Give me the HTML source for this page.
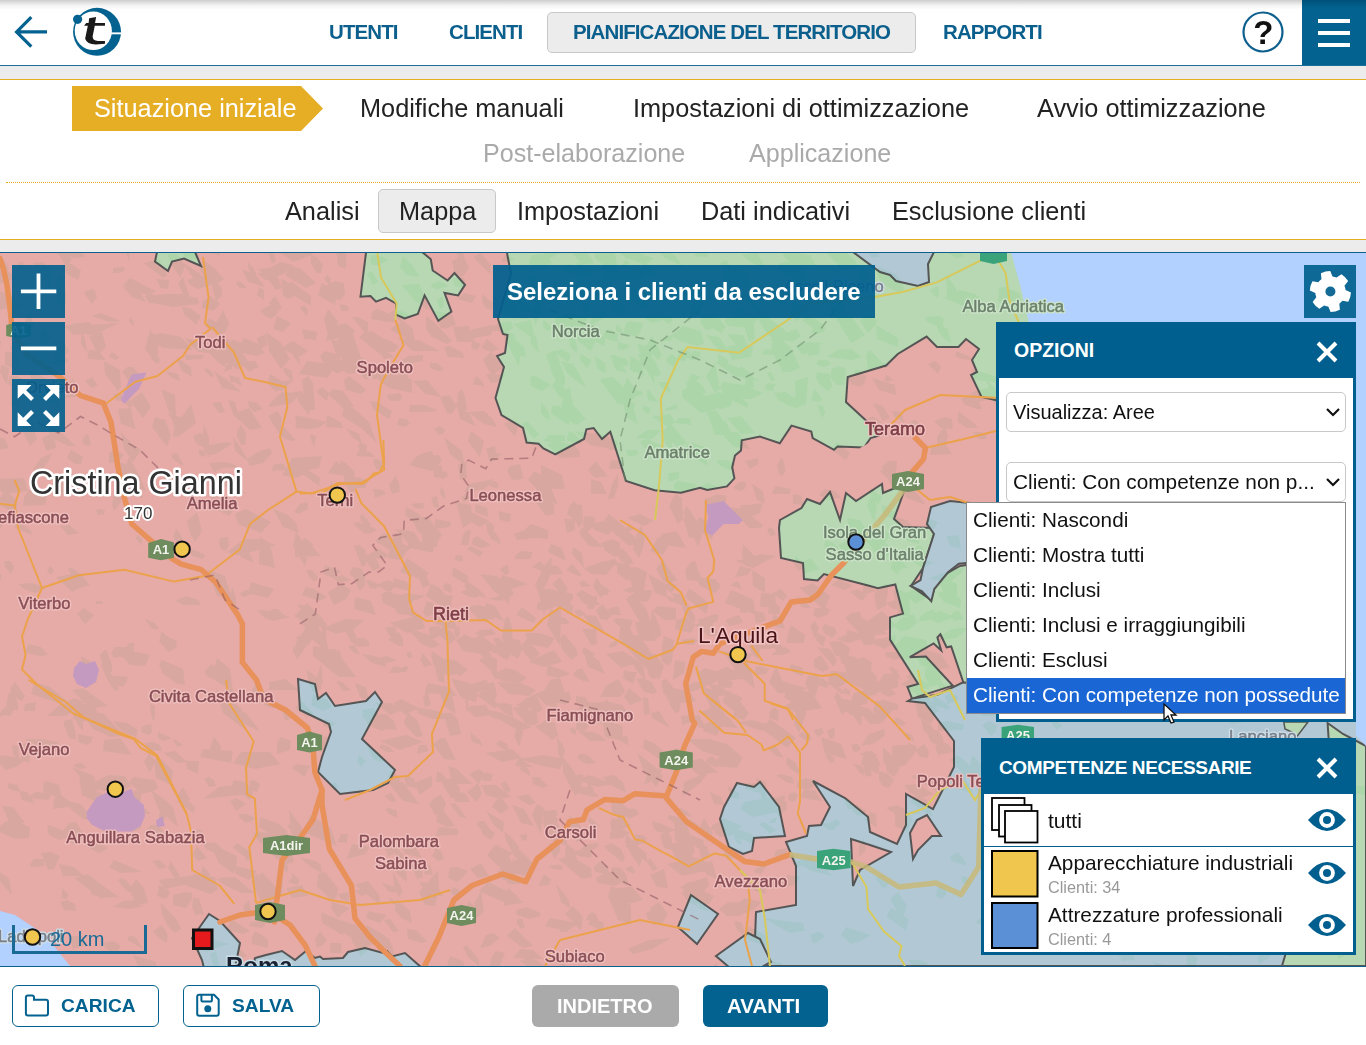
<!DOCTYPE html>
<html><head><meta charset="utf-8">
<style>
*{box-sizing:border-box;margin:0;padding:0}
html,body{width:1366px;height:1045px;overflow:hidden;background:#fff;font-family:"Liberation Sans",sans-serif}
.abs{position:absolute}
.t{position:absolute;white-space:nowrap;line-height:1}
#top{position:absolute;left:0;top:0;width:1366px;height:66px;background:#fff;border-bottom:1px solid #1d6e97}
#shadow{position:absolute;left:0;top:0;width:1366px;height:10px;background:linear-gradient(#cecece,#f4f4f4 55%,#fff)}
.nav{color:#0b5f8d;font-weight:bold;font-size:20.5px;letter-spacing:-0.9px}
#gray1{position:absolute;left:0;top:66px;width:1366px;height:187px;background:#ececec}
#steps{position:absolute;left:0;top:79px;width:1366px;height:161px;background:#fff;border-top:1px solid #e5ae25;border-bottom:1px solid #e5ae25}
#dots{position:absolute;left:6px;top:182px;width:1354px;height:0;border-top:1.5px dotted #e5ae25}
.step{color:#222;font-size:25.3px}
.gstep{color:#aaa;font-size:25.1px}
.sub{color:#222;font-size:25.3px}
#map{position:absolute;left:0;top:252px;width:1366px;height:715px;border-top:1px solid #0d5f8e;border-bottom:1px solid #0d5f8e;overflow:hidden;background:#e6aaa6}
.btn{position:absolute;height:42px;border:1.5px solid #0d5f8e;border-radius:6px;color:#0d5f8e;font-weight:bold;font-size:21px}
.panel{position:absolute;background:#fff;border:3px solid #005f8e}
.phead{position:absolute;left:0;top:0;right:0;background:#005f8e;color:#fff;font-weight:bold;font-size:20px}
</style></head><body>
<div id="gray1"></div>
<div id="top">
  <div id="shadow"></div>
  <!-- back arrow -->
  <svg class="abs" style="left:10px;top:12px" width="40" height="40" viewBox="10 12 40 40"><path d="M17.3,31.9 H47 M31.3,17.2 L16.6,31.9 L31.3,46.6" fill="none" stroke="#03628f" stroke-width="3.2" stroke-linejoin="miter"/></svg>
  <!-- logo -->
  <svg class="abs" style="left:68px;top:4px" width="60" height="56" viewBox="68 4 60 56">
    <circle cx="97.05" cy="31.85" r="24" fill="#03628f"/>
    <ellipse cx="93.3" cy="30.8" rx="18.6" ry="19.3" fill="#fff"/>
    <rect x="110" y="32.4" width="12" height="1.9" fill="#fff"/>
    <circle cx="77.6" cy="19.3" r="4.6" fill="#03628f"/>
    <path d="M89.16,18.19 L96.12,17.12 L95.05,23.01 L104.96,23.01 L104.96,25.69 L94.78,25.69 L92.64,36.14 Q92.5,40.5 98,40.96 L104.96,40.96 L104.96,43.64 L95.85,44.44 Q87,44.5 85.14,38.82 L87.82,25.69 L84.07,25.69 L86.21,23.01 L88.62,23.01 Z" fill="#1a1a1a"/>
  </svg>
  <div class="t nav" style="left:329px;top:22.4px">UTENTI</div>
  <div class="t nav" style="left:449px;top:22.4px">CLIENTI</div>
  <div class="abs" style="left:547px;top:12px;width:369px;height:41px;background:#ececec;border:1px solid #c8c8c8;border-radius:5px"></div>
  <div class="t nav" style="left:573px;top:22.4px">PIANIFICAZIONE DEL TERRITORIO</div>
  <div class="t nav" style="left:943px;top:22.4px">RAPPORTI</div>
  <svg class="abs" style="left:1241px;top:10px" width="44" height="44" viewBox="0 0 44 44"><circle cx="22" cy="22" r="19.5" fill="none" stroke="#0d5f8e" stroke-width="2.2"/><text x="22.3" y="33.8" text-anchor="middle" font-family="Liberation Sans" font-weight="bold" font-size="33" fill="#111">?</text></svg>
  <div class="abs" style="left:1302px;top:0;width:64px;height:65px;background:linear-gradient(#005078,#03628f 8px)"></div>
  <div class="abs" style="left:1318px;top:19px;width:32px;height:4.4px;background:#fff"></div>
  <div class="abs" style="left:1318px;top:31px;width:32px;height:4.4px;background:#fff"></div>
  <div class="abs" style="left:1318px;top:43px;width:32px;height:4.4px;background:#fff"></div>
</div>

<div id="steps">
  <svg class="abs" style="left:72px;top:6px" width="251" height="45" viewBox="0 0 251 45"><path d="M0 0 H229 L251 22.5 L229 45 H0 Z" fill="#e5ae25"/></svg>
  <div class="t step" style="left:94px;top:15.6px;color:#fff">Situazione iniziale</div>
  <div class="t step" style="left:360px;top:15.6px">Modifiche manuali</div>
  <div class="t step" style="left:633px;top:15.6px">Impostazioni di ottimizzazione</div>
  <div class="t step" style="left:1037px;top:15.6px">Avvio ottimizzazione</div>
  <div class="t gstep" style="left:483px;top:60.5px">Post-elaborazione</div>
  <div class="t gstep" style="left:749px;top:60.5px">Applicazione</div>
  <div class="abs" style="left:378px;top:109px;width:118px;height:44px;background:#ececec;border:1px solid #c8c8c8;border-radius:5px"></div>
  <div class="t sub" style="left:285px;top:118.6px">Analisi</div>
  <div class="t sub" style="left:399px;top:118.6px">Mappa</div>
  <div class="t sub" style="left:517px;top:118.6px">Impostazioni</div>
  <div class="t sub" style="left:701px;top:118.6px">Dati indicativi</div>
  <div class="t sub" style="left:892px;top:118.6px">Esclusione clienti</div>
</div>
<div id="dots"></div>

<div id="map">
<svg width="1366" height="713" viewBox="0 253 1366 713" style="position:absolute;left:0;top:0;display:block">
<defs>
  <pattern id="forestP" width="60" height="60" patternUnits="userSpaceOnUse">
    <rect width="60" height="60" fill="none"/>
    <path d="M5 8 l14 -4 l6 10 l-8 9 z M32 30 l12 -6 l10 12 l-10 10 l-9 -3 z M8 40 l9 2 l-2 12 l-10 -4 z" fill="#000" opacity="0.05"/>
  </pattern>
</defs>
<!-- base pink -->
<rect x="0" y="253" width="1366" height="713" fill="#e6aaa7"/>

<!-- green A -->
<path d="M507,253 L511,274 L498,319 L503,334 L507.5,335 L505,353 L497,356 L504,367 L495.5,398 L501.5,415 L523,428 L526.6,442.5 L538.6,443.7 L543.4,448.5 L555.3,454.4 L584,439 L586.4,429.3 L593.6,428 L602,439 L610.3,431.7 L626,481 L654.6,490.3 L681,492.7 L700,487.8 L707.3,490 L727,486.4 L734.4,478.3 L732.2,467.3 L735,455.6 L741,450.5 L741.7,440.3 L760,436.6 L779.8,443.2 L791.5,425.6 L811.3,431.5 L812.7,438 L834,449.8 L837.6,446.6 L864,447.6 L870.6,438 L883.7,434.4 L1366,434 L1366,253 Z" fill="#b7d8b2"/>
<path d="M507,253 L511,274 L498,319 L503,334 L507.5,335 L505,353 L497,356 L504,367 L495.5,398 L501.5,415 L523,428 L526.6,442.5 L538.6,443.7 L543.4,448.5 L555.3,454.4 L584,439 L586.4,429.3 L593.6,428 L602,439 L610.3,431.7 L626,481 L654.6,490.3 L681,492.7 L700,487.8 L707.3,490 L727,486.4 L734.4,478.3 L732.2,467.3 L735,455.6 L741,450.5 L741.7,440.3 L760,436.6 L779.8,443.2 L791.5,425.6 L811.3,431.5 L812.7,438 L834,449.8 L837.6,446.6 L864,447.6 L870.6,438 L883.7,434.4" fill="none" stroke="#555" stroke-width="2"/>
<!-- pink Teramo -->
<path d="M883.7,434.4 L866,420.5 L846,402 L847.7,377 L886,365.5 L897.8,354 L926.6,336.6 L937,347 L958.5,347 L966,339 L979,349 L972,360 L977,372 L971,375 L981.5,397 L1000,401 L1000,530 L870,530 L860,448 Z" fill="#e6aaa7"/>
<path d="M883.7,434.4 L866,420.5 L846,402 L847.7,377 L886,365.5 L897.8,354 L926.6,336.6 L937,347 L958.5,347 L966,339 L979,349 L972,360 L977,372 L971,375 L981.5,397 L1000,401" fill="none" stroke="#555" stroke-width="2"/>
<!-- blue C top -->
<path d="M853,252 L880,272 L890,275 L896,281 L918,286 L929,282 L928,264 L934,252 Z" fill="#b2c9d5" stroke="#555" stroke-width="2"/>
<!-- small green D top-left -->
<path d="M157,252 L155,261.5 L168,271 L172,261.5 L184,258.6 L201,266 L195,252 Z" fill="#b7d8b2" stroke="#555" stroke-width="2"/>
<!-- green Foligno top -->
<path d="M366.1,252 L360.5,296.7 L370.5,296 L376,301.6 L386,297.9 L396,303.5 L396,314.7 L404.7,318.4 L417.8,314 L424.6,295.4 L438.3,320.9 L451.4,311.6 L444.5,292.9 L458.2,295.4 L465,284.8 L454.5,273 L447.6,280.5 L432.7,270.5 L430.8,259.3 L422.1,252 Z" fill="#b7d8b2" stroke="#555" stroke-width="2"/>
<!-- green Isola -->
<path d="M780,520 L801.5,508 L807,499 L820,504 L830,492 L840,520 L846,493 L856,501 L882,484 L883,493 L907,483 L894,519 L903,527 L933,528 L934,534 L923,568 L911,586 L931,600 L937,579 L960,566 L1000,560 L1000,700 L963.4,682.5 L951.2,646.5 L946.6,647.3 L940.4,634.3 L937.4,637.3 L941.2,650.4 L933.6,643.5 L909.8,657.2 L925.9,656.5 L952.7,685.6 L912,698.6 L907.5,687 L918.2,684 L890,639.6 L890,617.4 L903,613.6 L895.3,584.5 L877.7,588.3 L870,586 L824,574 L817.6,580.5 L804,579 L803,563 L781,558 L779,528 Z" fill="#b7d8b2" stroke="#555" stroke-width="2"/>
<!-- blue F -->
<path d="M927,524 L931,507 L950,501 L1000,506 L1000,560 L958.8,563.8 L948,572.3 L934.3,589 L931.3,601.3 L922,591.4 L910.6,586 L920.5,580 L923,568 L934,534 Z" fill="#b2c9d5" stroke="#555" stroke-width="2"/>
<!-- blue G large lower right -->
<path d="M786,842 L807,836 L809,826 L821,825 L830,807 L813,781 L845,798 L868,817 L870,832 L897,844 L906,825 L906,794 L933,809 L954,767 L954,741 L925,703 L908,701 L912,698.6 L937.4,694.8 L962.6,682.5 L1366,690 L1366,966 L754,966 L756,912 L796,905 L796,866 Z" fill="#b2c9d5" stroke="#555" stroke-width="2"/>
<!-- pink islands in G -->
<path d="M851,839 L870,845 L891,852 L860,870 L853,886 Z" fill="#e6aaa7" stroke="#555" stroke-width="2"/>
<path d="M910,833 L917,820 L927,815 L941,836 L932,836 L918,850 L913,859 Z" fill="#e6aaa7" stroke="#555" stroke-width="2"/>
<!-- green coastal right -->
<path d="M1327.6,723 L1343,734 L1366,746 L1366,966 L1282,966 L1300,905 L1330,760 Z" fill="#b7d8b2" stroke="#555" stroke-width="2"/>
<path d="M1283.8,722 L1285,729 L1292,732 L1296,737.7 L1308,722 Z" fill="#b7d8b2" stroke="#555" stroke-width="1.5"/>
<!-- blue H lake region -->
<path d="M298,679 L315,684 L318,699 L326,693 L335,706 L366,701 L375,692 L382,702 L362,739 L395,770 L388,783 L373,790 L340,794 L318,772 L322,757 L331,732 L329,724 L300,710 Z" fill="#b2c9d5" stroke="#555" stroke-width="2"/>
<!-- blue I Fucino -->
<path d="M737,783 L754,787 L760,782 L779,807 L785,836 L754,838 L752,851 L743,854 L729,847 L720,819 L724,807 Z" fill="#b2c9d5" stroke="#555" stroke-width="2"/>
<!-- blue J small -->
<path d="M691,895 L718,914 L697,944 L678,927 Z" fill="#b2c9d5" stroke="#555" stroke-width="2"/>
<path d="M716,956 L748,933 L760,939 L771,962 L760,968 L730,968 Z" fill="#b2c9d5" stroke="#555" stroke-width="2"/>
<!-- Roma region -->
<path d="M209,914 L220,921 L240,943 L235,968 L204,968 L202,960 L192,938 Z" fill="#b2c9d5" stroke="#555" stroke-width="2"/>
<path d="M253,968 L255,958 L266,955 L282,951 L295,960 L306,951 L315,958 L320,956.5 L323,959 L343,958 L348,952 L365,948 L383,953 L387,951 L392,956.5 L405,953 L422,968 Z" fill="#b2c9d5" stroke="#555" stroke-width="2"/>
<path d="M55,239l8,4l9,16l-5,8l-14,-21zM59,243l11,0l7,1l8,13l-12,1l-4,-4zM129,261l-7,-19l5,-1l3,9zM199,260l-13,-2l-6,-8l4,-10l7,3l6,7zM211,252l-1,-5l3,-3l5,6l2,6zM259,242l-2,9l-3,2l-8,-4l0,-3l5,-6zM272,264l-4,-12l5,-1l3,10zM309,256l-16,6l-12,-9l12,-7l11,0l9,8zM346,252l0,17l-8,-3l-3,-28zM402,245l-2,4l-9,-1l1,-4l9,-5zM449,245l-10,5l-6,-2l11,-10zM461,249l3,6l1,8l-7,-4l-1,-5zM515,259l-7,3l-7,-1l4,-6zM551,258l-9,-1l5,-8l8,-5l4,9zM570,253l-1,-7l1,-3l3,-3l1,4l1,7zM573,254l12,-5l5,8l4,7l-12,0zM595,258l1,-8l3,3l4,12zM602,254l5,2l6,7l0,4l-10,-5l-5,-5zM629,249l24,9l-7,7l-20,-7l-12,-10zM657,249l18,6l7,11l-17,-8zM709,249l-2,8l-13,-1l8,-7zM730,231l22,7l5,11l3,10l-12,-6zM757,256l6,6l0,5l-11,-4l-11,-9l9,0zM793,265l-6,-5l-8,-10l31,5l6,11zM841,248l15,13l-3,7l-10,2l-19,-20l8,-5zM863,237l9,8l8,12l-8,1l-7,-11zM951,241l13,15l-7,2l-9,-5zM1057,251l-4,-7l6,-2l6,13zM1075,240l6,4l-4,4l-5,3l-8,-7l3,-4zM1233,264l-5,-2l-5,-12l3,-10l6,3zM1277,255l4,-2l7,3l6,5l-7,1l-6,1zM9,268l-4,11l-7,-6l-1,-23zM23,269l-5,-3l0,-4l6,1zM43,262l9,9l-1,17l-11,-12l-7,-13zM70,276l-8,-8l2,-5l8,1l9,7l-3,9zM120,273l-7,0l0,-5l11,-1l1,3zM149,267l-5,-4l15,-4l4,9l5,7l-5,3zM173,267l-6,-13l10,0l8,11l-2,7l-3,5zM209,284l-14,-3l-4,-6l-9,-13l17,11zM207,281l-7,-11l3,-10l11,8l10,11l-10,7zM248,267l0,-5l6,7l4,11l-8,-8zM293,265l-9,9l-18,6l-9,-6l24,-12zM301,269l15,14l-10,5l-21,-13l6,-9zM311,264l0,-9l6,2l6,8l-2,8l-4,0zM383,257l5,3l-9,5l-7,0l-2,-5l2,-5zM407,275l-7,-8l3,-11l9,9l8,12zM469,268l-6,8l-8,0l-3,-15l4,-2l7,-4zM473,257l8,-4l10,12l-1,9zM531,271l-2,-10l3,-6l14,-1l6,9l-7,5zM588,269l-6,10l-21,-11l7,-4zM600,270l-10,7l-13,-3l0,-12zM614,247l5,29l-12,5l-5,-21l-7,-18zM626,260l4,3l-9,6l0,-3zM644,264l8,2l4,12l-6,-2l-11,-6zM726,260l11,16l-10,-1l-7,-12zM804,268l6,19l-6,2l-22,-17l-4,-8l8,-2zM859,265l-4,5l-9,-4l7,-5zM1023,264l-10,-5l9,-8l9,8l2,5zM1150,257l8,-2l4,10l-6,2l-4,-5zM-1,284l0,-11l6,-2l11,8zM19,279l-14,0l-7,-6l7,-4zM123,285l7,-7l27,14l-18,2zM169,280l-1,9l-7,-1l-5,-9zM183,277l7,21l-5,0l-7,-15l2,-2zM208,274l3,11l-13,4l-8,-4l-3,-5l8,-2zM237,281l4,1l6,6l-7,0l-4,-4zM242,269l14,6l9,12l-17,-5zM276,290l-9,-12l-9,-9l10,-1l10,9l4,11zM295,280l1,-5l10,5l4,6l-6,1zM324,279l3,-4l4,4l-1,7zM378,282l-5,3l-6,-11l5,-3zM437,289l-6,-2l1,-3l7,-3l4,2l5,3zM453,279l8,-3l4,4l1,7l-7,0l-4,-1zM517,297l-13,-2l-7,-11l-2,-9l15,12zM515,290l-7,-5l7,-1l8,7zM535,290l-7,-15l16,6l-2,7zM581,290l-8,-2l6,-8l12,1l4,6zM599,287l-4,-5l8,-5l11,9zM642,279l-16,1l-19,3l12,-10l8,-2l16,-2zM745,285l-17,4l-5,-13l21,-2zM740,285l-4,-10l-3,-9l10,2l8,17l-5,3zM861,264l7,15l-3,6l-6,-12zM896,274l9,15l-5,4l-18,-9l-6,-12l3,-5zM947,295l-1,-20l4,5l5,6l6,18l-9,-5zM1049,290l-4,-8l2,-1l4,0l1,7l1,5zM1129,273l5,13l6,11l-10,2l-5,-13l2,-10zM1347,282l5,0l1,10l-5,11l-5,-8zM1369,275l7,11l-4,3l-10,-9l-3,-8zM-7,302l8,-11l12,6l9,10l-13,1l-9,2zM56,278l5,-4l5,19l0,7l-2,12l-7,-13zM97,297l-5,7l-6,-8l-2,-4l8,-3l3,2zM122,286l18,6l6,10l-14,-5zM155,296l1,7l-7,0l-4,-7l4,-5zM188,294l-12,6l-8,6l-16,-3l-3,-7l15,-2zM182,295l16,3l1,6l-27,3l-16,-6l0,-6zM222,296l-6,5l-5,-18l3,-5l8,11zM259,287l5,3l0,10l-7,-5zM288,299l-5,-3l-2,-18l8,5l6,12l-4,3zM311,306l-18,-11l-6,-7l4,-7l8,6l12,9zM335,305l-17,-10l4,-12l15,9zM325,286l10,-5l9,2l1,10l-4,7l-10,-2zM425,297l4,13l-14,-9l-13,-16l17,-1zM442,297l2,5l-1,5l-3,2l-3,-7l2,-4zM476,296l-4,7l-15,-4l7,-6zM492,310l-6,-2l-4,-7l0,-7l11,9zM514,301l2,8l-6,-1l-7,-3l3,-5l4,-1zM533,292l7,2l4,5l-6,4l-4,-1zM552,303l-5,1l3,-15l5,-8l5,7l2,14zM568,300l-1,-7l8,-2l5,8zM585,292l1,8l-3,4l-5,-8l3,-11zM645,310l-23,-16l8,-7l22,9zM666,296l0,6l-8,-8l-3,-5l2,-4zM689,295l-2,-9l8,-4l9,3l0,5l-4,6zM710,286l1,-8l18,14l-3,4zM726,283l11,7l-1,15l-14,-10zM748,293l9,7l-8,6l-7,-12zM786,309l-8,-8l-4,-8l12,6zM793,296l-9,-1l-9,-5l9,-2l7,-1zM812,304l-16,-9l5,-5l17,11zM938,286l1,4l0,5l-2,3l-3,-3l-4,-5zM966,307l-22,-9l16,-8l15,4l9,6zM999,288l6,-1l14,6l5,15l-6,5l-20,-12zM1170,304l-7,2l-3,1l-1,-5l3,-3l6,1zM109,322l-17,-6l9,-3l20,8zM190,308l11,8l-5,9l-12,-11l-2,-7zM211,296l9,8l-7,7l-11,-3l0,-6zM279,311l-3,4l-5,4l-7,-4l-4,-5l11,-5zM275,296l7,12l-7,4l-6,-9zM300,308l4,-3l4,5l-1,7zM349,307l-1,4l-7,0l-1,-4l0,-3l5,1zM393,315l3,7l-8,0l-17,-3l1,-7l5,-3zM389,312l7,-2l8,2l6,4l-9,6zM434,311l18,3l4,11l-12,4zM500,311l9,-6l21,14l-19,-1zM523,314l-6,-13l10,2l4,7zM532,311l8,-11l-1,17l-4,9zM590,306l2,4l-7,2l-4,-7l5,-2zM593,315l13,-5l0,7l-17,9zM619,315l-9,-12l-5,-7l14,6l5,2l2,9zM660,321l-8,2l-9,-6l12,-3l7,4zM656,313l10,2l5,1l2,4l-4,4l-8,-5zM699,298l4,2l-4,16l-3,-1l-6,2l2,-12zM735,311l4,-6l4,6l1,5l-2,4l-10,-7zM793,302l2,0l5,6l-1,12l-3,1l-5,-9zM841,303l4,12l-3,4l-8,-5l-8,-13zM926,317l13,-1l5,3l-2,9l-16,-7zM1052,302l12,13l-3,4l-19,-7zM1137,314l8,0l5,11l-15,1zM1269,323l-9,6l-7,-9l0,-8l9,-1zM31,310l3,18l-7,7l-2,-15zM73,335l-8,-9l16,-3l8,10zM91,331l-11,3l-4,-2l-5,-8l18,-2l6,6zM96,334l-10,1l3,-10l30,-2zM129,321l1,-4l4,5l-1,4zM225,328l-6,6l-14,-8l4,-8zM223,310l6,13l-3,8l-5,4l-6,-2l1,-10zM277,316l14,7l-8,9l-10,-3zM317,332l-1,8l-12,-1l-2,-10zM328,309l10,12l-3,14l-8,-3l-3,-13zM326,341l3,-14l17,-4l10,9l-12,5zM358,317l10,5l0,15l-7,-9l-9,-11zM415,344l-25,-15l13,-8l10,8zM432,337l-6,-8l0,-13l8,6l18,19l-5,3zM438,322l-1,-6l5,3l4,7l-2,1l-3,2zM457,342l-4,-15l16,-1l6,16zM473,329l20,-4l-1,5l-1,5l-17,3l-8,-2zM513,328l-9,6l-7,-3l-11,-1l13,-7l12,-2zM529,336l-16,-12l18,-4l3,14zM543,327l0,-7l4,2l5,6l-4,3zM567,313l21,4l-5,12l-26,4l-2,-14zM587,325l7,-3l2,13l-6,-2zM616,327l1,-3l4,4l1,2l1,4l-7,-3zM629,321l14,2l-3,9l-3,4l-14,-1l3,-12zM714,324l-4,6l-5,-1l-5,-7l3,-7l7,3zM726,327l-5,6l-9,-5l-7,-13l10,-2zM724,320l19,-8l18,4l-12,12l-21,-2zM747,335l-4,-13l8,-3l3,7l1,13l-6,3zM752,304l17,14l17,13l-6,11l-12,-7l-8,-13zM777,337l-2,-7l4,-4l5,3zM824,332l-11,-4l-11,-8l4,-3l9,2l8,5zM819,324l7,4l-7,6l-8,-1l3,-7zM865,335l-14,8l-18,-30l18,3zM868,333l-8,-12l6,-6l11,5l-2,6l-4,4zM944,339l-5,-7l-5,-14l14,12l1,5l3,8zM1081,330l3,-4l5,0l6,1l-5,4l-4,3zM1124,327l4,-2l6,-4l12,12l-3,5l-11,1zM1210,328l-5,-12l6,-4l10,3l-1,15l-5,-1zM1,341l-1,8l-4,2l-7,-2l1,-10zM16,341l4,7l-1,5l-9,-4l2,-4zM21,351l-7,-10l9,0l7,2l2,5l-2,3zM43,328l8,8l-8,10l-3,-11zM69,351l-4,5l-7,-7l-4,-8l11,3zM81,328l4,11l2,14l-6,-9zM98,355l-9,-19l13,-4l4,15zM156,337l2,9l0,14l-6,-2l-7,-9l5,-19zM146,337l15,-4l20,4l12,13l-30,-2zM185,338l21,5l12,11l-19,-2l-9,-7zM232,350l0,-5l-1,-6l11,4l7,7l-9,6zM256,353l-9,-4l-6,-6l10,-3zM267,345l-8,5l-2,-12l9,-4zM272,342l9,4l0,11l-7,-5zM308,351l-7,5l-9,-2l-10,-6l7,-5l4,-2zM352,331l10,30l-10,3l-12,-9l-3,-30zM372,331l16,11l-2,17l-10,-8l-17,-14l6,-5zM399,346l-5,6l-10,0l-18,-14l20,1zM398,338l21,2l21,11l-27,0zM476,342l5,2l-4,6l-6,-2l1,-6zM487,339l12,10l-8,3l-10,-4zM518,348l-12,-5l-5,-14l13,5zM526,357l-12,-3l-6,-9l8,-5l8,7zM530,331l6,6l3,16l-8,-9zM575,338l2,9l0,6l-6,-5l-4,-15zM582,327l14,13l-5,11l-12,-9l-6,-15zM604,346l-9,-5l-1,-7l11,3l0,5zM606,339l-3,-5l5,-5l10,5l-1,8zM618,349l0,-7l11,3l-1,3l-5,2zM673,334l-1,4l-2,3l-7,0l1,-3zM682,342l-11,-6l12,-10l18,5l3,12l-6,3zM729,351l-8,2l-15,-18l13,2zM727,334l16,1l9,19l-13,-5zM771,341l3,-9l7,5l-3,4zM783,333l5,-1l8,-3l5,7l-9,6l-10,-2zM813,350l-10,5l-8,-9l13,-4l14,1zM898,347l-21,-8l-1,-14l22,13zM1013,352l-7,5l-5,-9l9,-6zM1052,351l-5,-7l7,-3l10,2l0,6zM1118,345l-8,-15l17,-1l4,13zM1214,351l0,-5l8,-3l6,7l-4,4zM1352,347l-2,4l-12,-5l4,-3l6,-1zM20,360l1,8l-7,1l-9,-4l0,-13l11,0zM42,349l10,13l-9,5l-12,-4l-8,-5l8,-4zM52,364l5,-12l12,8l-7,6zM106,360l-19,-1l2,-9l9,0zM109,357l3,-5l7,5l-3,3zM157,364l-6,-5l4,-5l3,3l2,2l-1,4zM186,360l-1,-5l14,0l6,0l-4,4zM218,362l-12,-12l7,-6l15,15l-3,8zM222,359l-7,-10l13,-10l17,17l3,6l-10,8zM244,338l14,6l7,9l-9,3l-14,-3l-3,-7zM269,351l-3,-19l15,11l9,16l-9,10zM300,365l-7,-9l2,-6l4,3zM345,369l-7,5l-13,-8l-5,-10l5,-5l13,4zM349,365l-13,-11l-5,-14l11,1l12,15l0,4zM363,357l4,10l-5,0l-6,-7zM383,354l4,-2l8,5l-12,2zM405,358l3,7l-3,4l-10,-5zM396,366l12,-10l15,-1l0,6zM462,352l3,6l-17,-1l-4,-10l6,-1zM492,376l-9,-16l8,-8l13,15zM520,356l-1,11l-11,-23l2,-7zM571,355l-3,7l-14,-10l8,-3zM580,360l0,-6l4,2l7,4l-1,4l-3,4zM616,370l-6,-15l6,0l11,18zM616,356l11,3l2,6l-11,2zM651,347l4,38l-10,-18l-8,-23zM646,347l6,-11l10,19l-4,5zM671,354l4,2l2,5l-4,6l-6,-4l-1,-4zM691,352l-6,9l-9,-1l5,-11zM692,361l-5,-4l7,-6l6,1l0,4zM728,360l0,9l-10,-5l0,-10zM732,360l-2,-6l-3,-8l17,-2l9,3l-2,10zM764,355l-2,-2l3,-4l5,1l2,1l5,3zM783,372l-12,-22l3,-18l17,16l9,20l-10,4zM808,356l-1,-11l13,1l-1,8zM820,366l-4,-2l3,-4l8,0l4,4l-7,3zM838,350l13,-1l11,8l-10,3l-25,-3zM884,364l-16,6l-2,-15l4,-5zM890,365l-4,3l-9,-3l-4,-3l8,0zM956,351l8,3l9,4l-3,2l-9,-1l-6,-3zM1115,367l-12,-3l0,-6l6,-2l7,6zM1,365l8,3l-2,18l-7,-14zM120,370l1,16l-3,5l-13,-17l-1,-13zM127,367l6,0l5,6l-2,6l-7,2l-7,-9zM170,372l8,2l2,7l-8,-3l-6,-6zM176,357l15,10l1,10l-10,-6zM214,376l-3,1l-7,-7l3,-2l4,3zM224,372l2,-6l6,-7l0,10zM229,375l11,3l-1,4l-8,0zM255,361l4,6l-6,2l-3,3l-7,-6l6,-5zM286,368l6,3l1,12l-7,-8l-3,-6zM328,378l-29,-4l8,-13l28,4zM343,359l10,1l3,13l-9,1l-7,-7l-2,-5zM377,373l-11,7l-11,-11l-1,-7l8,4zM370,371l6,-2l9,4l-2,6l-10,0zM396,370l2,-7l4,2l6,8l0,7l-4,3zM443,368l-1,3l-4,0l-8,-3l0,-5l7,0zM486,374l19,1l-4,6l-10,2zM565,377l0,8l-7,1l-6,-13l-6,-18l9,-5zM561,361l12,3l7,13l-13,-4l-3,-6zM568,374l4,-9l4,3l10,19l-7,-4zM595,356l10,7l1,10l-9,-4zM641,362l3,14l-14,-6l0,-14zM643,368l-5,-14l16,5l7,15l-4,3zM692,374l9,3l-6,4l-7,-2zM741,369l18,12l-24,-5l-20,-14l7,-1zM738,372l3,-6l12,9l-6,6zM771,381l-4,-8l4,-1l4,8zM839,366l7,3l-2,16l-7,0l-7,-8l2,-8zM866,376l-1,6l-4,3l-5,-7l-2,-7l3,-2zM893,380l-5,2l-4,-2l2,-5l4,2zM928,364l7,-3l6,5l-3,8zM972,369l25,8l0,6l-24,-4zM1036,362l5,2l6,6l-5,5l-17,-6l-2,-9zM1047,380l-2,-7l14,0l3,5zM1276,369l10,3l-8,8l-12,-5l-7,-4l1,-3zM1286,369l9,9l-5,4l-8,-9zM1321,365l10,8l4,14l-15,-12zM1351,373l-13,10l-12,-11l20,-6zM27,381l-4,7l-3,8l-12,-13l2,-7l7,0zM45,378l11,16l3,12l-20,-8l-7,-16l-4,-12zM73,397l-7,1l0,-10l7,-10l4,11l0,8zM92,377l6,8l-6,3l-7,-7zM133,384l-5,-4l4,-1l3,1l4,4l-3,2zM230,382l11,10l-19,-4l-8,-17zM242,385l-3,0l-4,-3l2,-3l4,3zM270,374l12,7l-6,11l-9,-9zM288,386l-6,5l-6,-1l0,-2l2,-6l14,-2zM302,380l6,-4l5,7l2,27l-9,0zM322,387l7,6l-1,3l-1,5l-9,-7l-1,-3zM349,376l12,9l5,5l-5,4l-15,-4l-2,-10zM376,378l-2,-9l38,10l0,14l-23,-5zM413,381l14,-1l14,17l-16,-3zM476,376l6,5l3,6l-7,-2l-5,0l1,-5zM551,385l-9,6l-11,-5l-1,-8l3,-3l11,6zM558,378l16,25l-14,-6l-8,-11zM624,404l-6,0l-18,-24l4,-2l9,-1l22,21zM641,395l-11,3l-7,-8l4,-12zM642,392l1,3l-11,0l3,-6zM668,382l2,8l1,3l-9,-5l-4,-6zM692,378l10,7l4,8l-18,-2l-2,-9zM720,389l-5,4l-9,-17l9,-13zM722,382l22,3l19,8l-12,6l-24,-1l-7,-10zM745,386l1,-8l7,-2l1,12zM765,390l1,-5l3,-2l7,1l-3,4l1,3zM796,403l-1,-22l13,-4l-2,27zM829,374l3,12l-4,5l-8,-6l-4,-7l1,-6zM847,377l20,-2l-5,12l-10,-2zM879,390l-7,-12l23,7l1,10zM968,404l4,-12l23,-6l-3,13zM1000,407l-10,-8l0,-9l-5,-11l9,8l8,11zM1006,397l-2,-17l9,8l2,14zM1041,387l-11,-6l1,-6l10,6zM1059,381l3,-15l7,15l2,9l-10,-2zM1130,390l-11,-2l-10,-11l3,-14l8,5l11,13zM1149,398l-8,-5l-5,-4l-5,-10l7,4l8,3zM1332,384l5,-3l5,3l-1,7zM1357,387l0,7l-4,10l-23,-7l7,-10zM16,387l4,15l-9,5l0,-19zM117,401l-4,-7l8,-1l3,7zM132,406l-2,2l-5,-5l3,-3l2,1zM151,407l-8,11l-13,-17l12,-9zM176,417l-7,-5l-8,-23l14,6zM219,413l-7,-10l9,-1l4,10zM238,412l-1,3l-4,-1l-2,-6l-3,-8l7,2zM254,412l-5,-5l-1,-6l9,2l6,6l-6,2zM276,406l-8,1l4,-6l10,-9l18,1l-8,10zM300,404l-6,-12l8,-1l4,7l4,13l-1,4zM328,394l5,-5l10,2l11,15l-8,5zM370,401l7,1l15,9l-3,8l-15,-9zM389,400l-2,-5l12,-2l3,3l-1,5l-8,0zM430,412l-21,0l1,-7l14,0l14,5zM447,413l-7,-16l9,-2l8,11l-5,8zM457,406l1,-13l4,-4l3,8l2,14zM572,402l-2,5l-7,8l-2,-6l5,-20l4,-1zM630,408l-7,-5l1,-3l11,3l-1,7zM648,400l-1,-8l1,-3l5,6l5,7l-5,-1zM665,409l13,-5l-2,5l-10,2zM717,409l-16,4l-19,-16l0,-6l10,-8l10,10zM732,399l-1,7l-10,3l-18,-6l2,-7l15,-4zM748,403l-1,5l-17,-9l-4,-10zM791,403l-11,-1l-6,-9l11,-1l6,3zM781,395l15,2l10,7l-10,4l-11,-4zM822,400l-4,2l-7,-2l2,-6l1,-5l5,5zM970,396l9,6l3,7l-5,0l-12,-4l-4,-6zM1287,408l-10,-2l-10,-14l10,-1zM1359,401l-11,-4l-4,-4l4,-1l10,2l5,4zM1372,401l5,4l6,9l-15,-6l-11,-8zM121,424l-3,-15l13,-1l2,12l3,9zM167,413l16,5l1,3l0,7l-10,-1l-2,-8zM196,423l-18,14l2,-18l11,-15zM249,408l13,20l-12,2l-18,-16zM277,411l5,7l-2,13l-4,-2l-8,-13zM320,427l-9,2l-16,-1l1,-5l-1,-8l32,7zM326,427l1,-12l14,7l2,6zM351,406l18,16l8,21l-16,-15l-19,-12l2,-11zM404,427l-7,-2l2,-7l8,1l3,5zM470,414l5,12l-11,-5l-4,-2l-4,-17l8,8zM497,427l-13,-3l-16,-12l16,-1l8,7zM541,413l0,-10l6,6l4,11l-6,-2zM558,406l14,8l-3,11l-10,-6l-8,-6l1,-7zM563,394l23,25l-10,6l-14,-9zM634,410l4,14l-12,-7l-4,-21zM642,409l2,-3l6,2l0,4l-2,2zM675,422l-7,5l-16,-10l18,-3zM675,423l3,-5l12,0l1,7zM705,410l12,1l10,16l-13,0zM822,418l-5,-13l6,1l2,7zM867,419l6,-3l9,6l-6,3zM890,418l-7,3l-10,-18l10,3zM892,411l10,1l2,11l-10,-7zM941,428l-7,-7l11,-4l7,2l1,10zM978,428l-11,0l-9,-6l0,-11l16,12zM1054,426l-4,4l-2,-16l4,-2zM1064,427l-2,-5l12,-3l1,4l-6,5zM1214,415l1,6l-1,3l-5,0l-1,-5l1,-3zM1338,416l-4,2l-5,1l-5,-8l2,-5l4,4zM21,419l9,-1l7,21l-7,7l-7,-13l-4,-12zM48,425l15,9l13,12l-8,0l-19,-10zM167,447l-15,-20l3,-10l10,3l6,15zM175,425l5,1l-1,10l-3,1l-3,-1zM205,436l-3,11l-6,-4l-3,-7l7,-3zM202,445l2,-21l5,14l0,20zM246,433l0,11l-5,1l-4,-9l0,-5l4,-6zM283,426l13,14l-4,1l-7,-2l-7,-7l-1,-7zM311,440l-1,-4l2,-2l4,3l-1,5l-1,5zM359,434l3,10l-10,-7l-6,-9zM439,435l-5,-6l5,-3l6,3l-1,4zM519,424l-4,13l-11,-13l6,-4zM539,434l-5,5l-12,-15l5,-3zM543,441l6,-6l12,0l4,1l0,5l-14,1zM578,437l4,7l-15,-3l1,-8l3,-2zM604,435l14,6l-2,9l-26,-5l-16,-14zM652,439l-16,-1l11,-8l14,0zM671,424l16,19l-8,5l-18,-15zM726,435l-11,0l-6,-17l9,1l8,3l6,13zM741,434l-14,-16l14,-2l14,17zM909,424l5,-5l7,6l-4,4zM941,431l4,-4l3,9l-2,9l-9,0l0,-8zM987,434l-1,5l-7,0l-6,-7l6,0zM1110,416l6,7l8,14l-2,4l-8,-5zM1232,436l-6,2l-3,-8l6,-19l5,-5l-1,21zM1265,441l-5,-5l-2,-4l13,-2l6,6l-5,1zM-12,452l-3,-14l19,0l5,10zM56,448l-10,3l-4,-13l12,-6zM88,434l2,6l1,5l-5,1l-4,-4l2,-6zM133,462l-9,-13l-3,-17l10,11l10,7zM205,451l1,6l-7,-2l0,-6zM227,442l5,2l-16,10l-5,1l-6,-5l4,-5zM241,448l9,15l-15,-12l-2,-14zM263,463l-14,3l-1,-8l12,-7l10,-3l2,5zM362,453l-4,-6l2,-4l2,0l5,2l-1,8zM375,457l-19,-1l4,-7l10,3zM444,437l18,14l3,15l-15,-12zM454,450l3,0l2,1l1,2l1,5l-5,-1zM484,441l-4,16l-12,-16l3,-10zM497,460l-7,2l-4,-13l9,-3zM547,444l12,-3l16,5l5,6l-1,5l-19,1zM606,438l5,2l3,8l-5,2l-3,-3zM636,450l3,3l-4,3l-7,0l-2,-6zM648,439l14,7l-10,3l-8,-1l-4,-7zM672,451l-7,-8l-2,-12l9,11zM685,454l0,-6l3,-5l9,11l-4,3zM687,449l5,-6l12,4l2,10l2,9l-12,-7zM720,432l18,0l12,17l-16,-2zM846,460l-14,-10l5,-8l7,5l6,6zM932,445l14,-1l6,10l-22,1zM1122,455l-10,-14l28,7l-4,10zM1126,441l-2,-3l11,2l2,4l-7,0zM1151,455l-7,-2l-2,-9l14,9zM38,475l-5,0l1,-7l7,-10l11,-5l-3,7zM83,457l-2,7l-6,0l-8,-6l4,-8l6,3zM115,449l9,6l-5,6l-10,2l0,-10zM123,463l9,5l10,10l-9,1l-17,-7l0,-10zM172,458l0,-4l5,-1l6,11l-1,2zM223,468l-9,4l-5,-9l12,-1l9,1l9,4zM273,465l9,-2l6,7l-16,1zM319,468l-35,6l8,-16l30,-2zM336,461l14,10l-5,5l-17,-3zM377,459l8,3l0,5l-8,3l-3,-6l-1,-5zM430,467l-11,-3l-5,-4l6,-6l12,-3l3,9zM431,471l-22,-6l8,-9l22,-1l3,6zM498,457l-7,5l-1,-3l-3,-2l5,-5l10,2zM622,461l-1,8l-12,0l2,-9zM733,470l-4,0l-10,-5l-2,-5l9,0l9,4zM758,464l-8,5l-5,-8l13,-3zM785,472l-3,4l-3,-2l-2,-9l5,-8l3,10zM881,468l7,-7l9,0l-1,11zM1034,460l-4,-7l7,-1l6,2l-3,5zM1052,461l7,-2l5,3l-4,2zM1068,446l16,16l4,11l-19,-8l-14,-18zM1214,454l13,-5l4,14l-4,9l-11,-11zM1234,449l11,10l3,8l-8,0l-10,-1l1,-12zM1318,474l-9,-17l5,-7l9,12l0,5zM146,491l-15,-5l-7,-15l5,-14l8,14zM178,482l-10,6l-4,-11l16,-5zM230,472l12,17l-10,3l-15,-13zM298,466l7,7l-8,5l-15,-3l6,-8zM320,478l-1,8l-18,-13l-1,-9zM352,496l-7,-13l-5,-23l6,3l8,8l2,16zM353,488l-11,-6l16,-5l10,4l-3,7zM396,487l-4,4l-1,-6l1,-4l4,-6l1,5zM443,472l-5,6l-4,-1l-2,-11l9,-1zM448,476l-5,3l-10,-4l13,-4zM460,480l-2,-16l8,-2l1,16zM507,471l3,-5l10,-2l2,8l1,7l-11,1zM534,483l-3,-1l1,-3l8,-2l1,4l-3,5zM537,484l4,-9l0,-10l21,10l3,14l-10,0zM588,470l8,-9l5,7l7,8l-13,2zM669,482l-1,-9l11,-1l0,6zM880,471l8,-4l23,16l-2,5l-16,1l-5,-10zM1034,474l-1,4l-8,1l-10,1l1,-6l17,-3zM1049,472l5,2l3,-1l1,9l-1,7l-6,-10zM1062,464l13,2l7,15l-10,-1zM1089,463l13,7l1,12l-6,-4zM1160,466l5,4l-4,9l-5,-2l-4,-6l-3,-15zM1304,482l-6,-1l-5,-3l0,-4l11,1zM1371,469l5,9l0,5l-9,2l-7,-4l0,-10zM4,494l-17,-15l37,-1l4,13zM45,505l-22,1l1,-9l5,-7l20,-1zM66,495l-7,0l-7,-9l5,-7l14,8zM139,486l4,12l-10,-3l-12,-10l4,-3zM208,490l4,3l3,0l-1,7l-3,-3l-3,-2zM237,495l-4,-5l0,-7l13,10zM332,480l2,13l-10,13l4,-15zM383,490l3,4l-11,4l-2,-9zM389,484l4,-3l5,-1l2,8l-1,4l-7,2zM445,496l-1,3l-3,-4l-1,-3l1,-6l3,5zM464,502l-3,-4l4,-4l6,4zM469,484l25,-5l-9,10l-21,3zM491,482l5,-1l3,6l-4,1l-7,-3zM502,489l7,6l2,5l-7,-4zM558,505l-10,-4l-20,-21l6,-9l13,7zM591,479l10,3l6,12l-16,0zM618,486l-4,12l-6,1l4,-15l6,-10zM674,484l4,-3l18,3l-2,6l-12,2l-8,-3zM700,487l7,-4l10,4l-6,3zM739,482l7,0l-1,7l-5,2l-7,-3zM752,484l11,7l2,12l-8,-3zM775,486l16,3l-1,5l-18,0zM828,500l-9,-5l6,-6l12,5l-2,5zM824,489l11,2l7,8l-12,-3zM878,505l-9,-12l2,-5l11,9zM916,492l10,13l-20,-7l-6,-12zM1042,494l5,10l-6,3l-7,-3l2,-8zM1110,501l-8,-4l-13,-3l3,-6l2,-5l10,4zM1193,482l2,4l-1,7l-7,-7zM-3,504l4,-7l4,-9l12,13l0,13zM104,515l-2,-1l-4,1l-2,-5l2,-1l7,1zM114,511l-2,-7l2,-10l8,-1l-1,9zM212,507l3,-12l19,14l-5,7zM300,504l7,-2l1,7l-9,5l-5,-2zM418,509l-4,-2l-3,-3l7,-1l5,0l1,5zM439,508l-5,-1l-3,-9l6,-2zM463,528l-7,-26l15,3l2,16zM476,504l11,4l1,6l0,3l-13,-5zM554,514l-8,2l-10,-14l0,-17l18,20zM575,521l-8,-7l3,-9l4,-4l8,10l-2,15zM572,515l4,-11l6,1l1,16l-4,7zM669,506l6,-12l7,4l1,21l-5,5zM706,497l11,10l1,6l-11,-7l-3,-5zM717,494l10,2l-2,7l-11,10l-11,-12zM748,505l15,-2l-3,10l-10,4l-11,-5l2,-7zM801,495l3,10l-11,-1l0,-10zM874,522l-7,-17l5,-12l5,15zM890,508l7,6l0,7l-14,-7l-1,-9zM1040,518l-16,-16l8,-4l13,5l3,10zM1177,511l-12,5l-7,-10l0,-15l15,4zM1190,501l13,8l4,6l-6,4l-19,-7l-7,-12zM1255,518l-6,7l-7,-6l-11,-15l7,0l8,-3zM1316,509l-26,0l-7,-10l13,-9zM-6,514l4,-1l5,10l-1,4l-6,3l-5,-11zM31,530l1,5l-17,-7l1,-8zM79,533l-11,2l-8,-9l9,-1zM187,521l10,-9l5,19l-7,11l-5,-9zM271,522l-10,11l-23,-9l-3,-10l11,-5zM299,533l-16,-6l-10,-18l15,6l8,8zM360,516l2,-2l5,5l4,6l-2,3l-8,-7zM367,524l10,6l-9,4l-4,-1l-10,-8l2,-3zM406,507l13,7l5,9l-6,-1l-5,0l-8,-7zM417,530l-7,-14l18,1l14,18l-8,12zM450,527l-15,2l0,-10l16,3zM470,511l19,10l-9,6l-9,-5zM492,534l-4,0l-2,-11l4,-1l4,4l0,4zM511,514l-1,8l-10,-2l-2,-9zM564,519l11,0l0,11l-8,3zM595,524l-8,9l-4,-7l1,-10l11,1zM610,523l2,7l-4,5l-14,-5l-3,-6l11,-3zM621,527l-8,0l-9,-7l5,-6l11,9zM626,528l4,-4l4,5l-6,3zM640,514l14,7l-10,5l-17,-8zM687,506l10,15l-6,9l-8,-18zM715,526l-3,14l-17,-12l4,-11zM761,528l-12,0l-19,-21l13,2l20,16zM773,529l3,5l-5,3l-4,-7l2,-3zM892,516l15,4l12,17l-10,4zM938,522l-4,7l-10,-3l4,-7l3,0zM1109,531l-8,-4l8,-6l6,7zM1205,537l-9,-15l3,-18l8,14l7,10zM142,546l-7,-8l3,-3l4,4zM180,533l3,7l-1,4l-4,0l-5,-7l3,-8zM228,537l1,8l-3,6l-5,-2l-2,-6l1,-5zM308,540l6,5l-9,4l-5,-4l4,-7zM394,546l1,-14l7,5l0,5l-1,17l-5,-8zM409,544l-14,-15l8,1l11,2l7,11l4,8zM422,536l1,-3l9,-1l6,8l-1,7l-14,-1zM461,545l2,-10l4,-5l4,1l-3,14zM473,538l4,-2l14,9l-5,2l-6,1l-8,-4zM487,531l5,-3l7,10l2,7l-6,-4l-4,-2zM522,531l13,0l-3,6l-4,2l-11,1l-3,-6zM537,538l-16,-1l4,-8l6,-5l17,6l0,9zM589,546l-10,-13l3,-6l21,20zM622,524l18,19l-11,3l-25,-22zM641,525l4,13l-3,13l-3,7l-6,-9l3,-13zM659,547l-2,-9l9,5l-2,8zM671,546l-11,-8l2,-4l14,-3l5,7l5,10zM698,547l-6,-13l-10,-16l8,0l7,8l5,10zM684,520l17,2l1,15l-13,1zM860,520l7,11l-2,10l-5,1l-11,-14l-2,-10zM875,552l-15,-19l12,-1l9,9l-1,11zM882,529l9,5l-6,8l-17,-5l-2,-12zM920,535l-1,9l-12,-3l-4,-10zM959,535l2,14l-11,-3l-4,-10zM977,529l16,6l-1,11l-11,-5l-7,-5zM1354,538l-15,-2l0,-7l8,-1zM205,555l-2,4l-10,-3l-2,-2l-2,-5l8,2zM241,557l-7,-12l13,2l7,16zM227,552l17,-13l15,0l17,6l-24,7l-19,3zM259,564l1,-27l10,6l5,25zM309,551l-4,15l-12,-20l3,-14zM312,546l9,10l-26,1l0,-9zM366,565l-4,2l-8,-21l6,-1l6,6zM390,556l-11,3l-11,-4l10,-7zM375,541l9,-8l27,15l-10,9zM405,555l-4,5l-13,-2l2,-10l14,-1zM411,538l23,8l-1,7l-26,-6zM457,555l5,1l1,5l-2,1l-7,-3zM480,557l-13,-8l4,-3l12,6zM515,556l5,-5l13,1l-3,7l-15,0zM566,561l-18,-9l3,-8l11,4zM582,553l2,15l-12,-14l1,-7zM606,552l-5,-9l12,-4l7,4l0,10l-5,4zM620,560l-3,-6l5,-6l6,6l6,9l-7,2zM663,555l-13,-4l8,-14l12,6zM742,555l1,-11l15,16l-5,8l-9,-3zM753,568l-17,-7l25,-7l15,2zM824,545l2,-5l7,3l5,4l-2,9l-8,-5zM852,550l8,8l-8,-4l-11,-3l-2,-7l7,-2zM873,551l-1,-14l10,2l6,6l1,5l-6,5zM894,567l-9,-13l6,-5l17,19zM925,552l-1,5l-7,-3l-3,-6l6,-3zM994,546l-4,11l-4,-5l-2,-4l4,-10l4,0zM1042,547l0,2l-4,2l-2,-4l-1,-5l5,1zM1097,550l-3,-5l3,-6l8,0l0,10zM1215,551l-7,-4l16,-5l3,4l-6,6zM1330,554l-2,-4l9,2l5,4l0,2l-5,4zM5,567l-1,-6l7,0l3,6l-3,7zM47,571l3,-5l4,4l-3,5zM75,580l-7,-10l2,-3l7,4l2,7zM323,574l2,-9l16,6l-8,7zM362,569l3,8l-8,1l-6,-2l-1,-5l4,-4zM374,556l4,6l2,6l-7,3l-7,-10l-2,-7zM423,580l-23,-8l7,-14l22,15zM500,569l4,-3l4,-1l1,8l-3,2l-2,-1zM546,572l-5,-1l-9,-4l8,-6l6,6zM545,569l3,-4l10,1l5,8l-15,1zM572,564l10,11l-4,1l-12,-6zM618,561l-12,14l-15,-1l-7,-6l20,-7zM613,565l-7,-3l9,-4l3,7zM629,565l9,13l-5,3l-7,-1l-9,-7l0,-11zM656,569l7,-9l7,10l7,10l-7,3l-7,-2zM687,580l-2,-10l6,-8l4,-1l6,16l-3,4zM735,577l5,-11l12,3l-5,6zM796,556l9,10l-6,5l-6,-8zM811,558l8,11l-16,5l-1,-12zM891,569l0,-4l4,-2l8,6l-4,2l-1,4zM934,563l-12,5l-14,-10l10,-3zM961,573l-11,9l-22,-3l14,-6l22,-5zM980,567l-4,6l-4,-7l-4,-5l4,-7l5,5zM991,582l-7,-6l-4,-8l8,0l10,10zM1179,556l7,3l3,8l-3,-1l-6,-1l-2,-4zM1263,571l-9,-3l1,-7l8,-2l6,7zM1281,565l3,7l-5,2l0,-5zM-7,572l2,-2l7,5l-3,9l-7,-2l-3,-8zM35,593l-11,-4l-6,-5l14,-1l14,5zM90,585l-11,3l-7,4l-16,-15l16,-3l8,-1zM225,576l7,23l-15,-3l-10,-27zM268,598l-20,-5l3,-11l23,7zM306,570l6,0l6,7l-3,5l-5,-4zM339,583l-6,-5l9,-3l9,5zM365,577l0,8l-5,6l-6,-11l-2,-13zM376,589l-6,-1l-4,-7l3,-1l11,5zM389,580l6,4l-3,7l-5,0l-10,-6l6,-3zM410,591l-18,-4l2,-9l13,4zM416,576l8,-1l3,2l3,8l-7,3l-3,-7zM444,590l-1,-4l3,-3l5,2l1,4l-1,4zM468,576l0,9l-16,-9l1,-9zM465,580l11,7l7,6l3,5l-16,-5l-5,-6zM509,604l-16,-14l-13,-16l17,2l13,14zM507,590l-8,-9l3,-6l13,4l13,5zM538,592l-3,-7l11,-22l6,-6l-1,17l-6,13zM563,596l-11,-12l8,-7l8,12zM591,586l-9,1l-3,-4l4,-3zM593,587l3,-9l10,11l-5,9zM637,585l11,0l-18,8l-8,-3zM634,593l-7,-25l9,-1l11,5l-3,17l-6,9zM655,593l-7,-19l18,10l1,13zM671,593l-7,-6l5,-6l8,5zM715,593l-15,-7l-6,-11l9,3l12,1l6,7zM742,590l-5,-3l-6,-1l2,-3l4,-2l2,2zM753,586l-1,-16l13,8l0,15zM831,585l8,-6l14,7l-9,4zM863,595l0,-7l2,-5l6,5l5,3l-7,2zM941,587l-4,-9l9,0l11,6l0,13l-11,0zM1088,590l-13,1l-10,1l0,-5l6,-3l8,3zM1250,588l6,-3l5,3l-3,4zM1272,574l4,4l0,11l-8,-2l1,-9zM102,601l1,3l-7,0l0,-3zM184,605l-9,-4l11,-5l12,4l3,5zM236,610l-7,-8l3,-15l4,10zM256,592l-12,5l-5,-3l7,-4l9,0zM320,601l-18,-6l4,-8l8,2l13,8zM330,597l-2,-5l14,-8l9,6l-5,9l-12,6zM383,603l-2,-9l8,-3l14,7l16,22zM392,600l1,-6l23,2l-5,8zM416,600l-14,0l3,-7l21,3zM438,604l-12,-8l5,-12l9,4l12,16l-2,6zM450,605l-14,-4l4,-7l13,2zM483,592l-7,6l-9,-2l-6,-4l8,-4zM503,601l-8,-1l-7,-1l11,-3l4,1zM506,587l6,3l2,4l-4,3l-4,-7zM541,602l-2,-12l5,0l1,7l1,6l-2,12zM573,599l-8,9l-23,-4l-5,-15l12,0l24,5zM576,594l6,-4l12,7l6,8l-16,-1zM597,596l0,5l-3,8l-6,0l-2,-7l4,-5zM606,587l4,4l-3,4l-5,0l0,-5l3,-3zM640,590l12,0l-1,6l-4,6l-15,-1l0,-7zM677,599l10,8l-17,-6l-6,-6zM677,601l-6,-8l9,1l11,14zM706,614l-21,-17l4,-9l20,15zM753,599l3,16l-31,-12l6,-13zM775,594l1,12l-16,1l1,-14zM783,601l-11,-8l9,-4l6,7zM801,607l-4,-11l7,4l7,8l-5,0zM821,608l-22,-21l5,0l9,-4l17,13l-5,13zM858,589l9,6l-5,6l-12,-9zM874,596l2,-5l11,-8l1,9l-2,14l-9,4zM893,591l5,-2l11,6l1,22l-11,-2zM920,588l8,9l-13,7l-10,-11zM937,593l11,-3l13,9l-1,9l-16,-6zM1007,595l1,-4l1,-5l4,4l1,3l-2,2zM1067,599l2,6l-4,0l-7,-3l0,-6l5,-3zM1297,600l0,-18l15,17l-1,12zM1338,588l9,-2l-8,12l-11,3zM85,624l-8,-10l7,-6l10,7zM273,611l17,6l-17,4l-8,-3l-8,-8zM280,617l-10,-8l8,0l6,6zM307,613l-5,-2l-5,-7l11,2zM323,619l-5,12l-24,-15l8,-7l5,-6zM376,615l-22,-6l1,-12l16,4zM410,615l-12,-1l-3,-4l1,-6l9,-4l4,3zM427,601l6,2l2,5l-1,6l-8,3l-3,-5zM456,614l0,4l-7,-5l-5,-8zM457,612l6,1l3,6l-5,3l-3,0l-2,-7zM480,621l-13,-14l11,-2l13,3l4,11zM486,603l9,3l9,15l-8,-3l-11,-8zM516,615l6,-8l14,11l-2,5zM537,609l0,-5l7,-5l3,8l-1,4zM555,607l-4,2l-8,1l-2,-2l-1,-4l7,-1zM567,601l6,5l-1,10l-7,-6l-9,-11zM579,609l7,5l-8,3l-4,-6zM612,615l-5,5l-7,-1l-4,-9l6,-6zM608,609l10,-3l3,9l-10,0zM652,627l-6,6l-20,-34l6,-5l14,14zM664,620l-11,-9l4,-5l19,2l0,12zM695,624l-10,-9l-4,-11l8,3l6,9zM715,614l4,1l-2,6l-9,5l-9,-2l-1,-4zM740,606l3,-5l10,7l-7,5l-6,-1zM764,613l2,8l-10,2l-3,-13zM769,606l6,-3l5,4l0,6l-4,2l-8,-2zM815,608l11,-1l4,3l-3,5l-9,3l-5,-3zM853,614l6,-3l5,10l-7,0zM886,603l9,-3l12,10l-14,-1zM925,621l-6,0l1,-4l6,-5l9,-3l-3,10zM955,617l-17,6l-15,-7l17,-5zM958,610l6,9l-11,2l-1,-8zM1070,609l1,10l-1,3l-3,2l-7,-13l4,-3zM1065,602l11,1l2,6l-9,0l-2,-4zM1150,613l-3,5l-3,1l-10,-3l-7,-9l9,0zM1164,619l-14,-2l-4,-9l9,-5l7,11zM155,623l4,6l-7,0l-7,-10zM326,635l3,18l-14,-11l-16,-22l16,6zM327,625l-1,11l-3,-4l-5,-10l5,-2zM345,619l19,1l-11,10l-17,4l-9,-4l-1,-3zM357,645l-6,-3l-7,-13l-1,-8l6,1l8,16zM389,635l-4,-7l10,-2l2,7l-5,5zM421,615l4,13l-18,5l-17,-10zM430,641l-1,-14l11,-1l-1,10zM435,623l-4,-3l16,-5l7,4l3,11l-13,-3zM455,636l-1,-6l1,-4l4,1l1,7l-3,4zM481,637l-6,-4l6,-3l11,-1l4,5zM506,647l-4,-9l3,-20l4,-1l3,10l1,15zM547,625l3,-15l11,0l-1,36zM569,622l-1,2l-7,0l-10,-3l4,-5l10,2zM593,628l-10,-13l13,1l8,15zM613,621l3,-3l9,1l8,1l-3,9l-7,0zM649,623l6,18l-9,0l-7,-3l-4,-16l5,0zM652,609l8,18l1,8l-6,5l-5,-13zM676,620l11,-3l8,8l-4,8l-16,-4zM708,636l-14,-12l12,0l9,12zM716,629l6,12l-10,-8l-11,-11l5,-5zM739,615l4,7l-4,2l-10,2l-4,-6zM774,615l7,3l4,11l-9,-2l-6,-4zM815,621l4,7l-4,11l-5,-13zM822,628l3,-4l10,4l2,5l-5,5l-8,-5zM861,638l-15,-1l1,-7l9,2zM875,635l-16,-2l-14,-15l8,-6l35,22zM897,626l-14,6l-17,-10l16,-11zM900,631l-6,-5l7,-8l13,-4l3,9l-9,7zM968,628l-11,10l-14,2l-9,0l18,-11l7,-1zM1013,606l21,15l-6,7l-10,5l-24,-16l4,-6zM1149,629l-9,-7l1,-6l12,1l1,7zM1203,629l-23,2l-24,-5l-9,-4l26,-4l10,-2zM1236,632l2,7l-3,2l-3,-4l-1,-8l3,1zM1294,629l-13,6l-6,-5l3,-7zM1285,625l17,-9l1,10l-18,9zM124,651l5,-8l5,0l0,10l-3,7l-4,0zM160,639l1,-8l10,8l-5,8zM176,648l-8,4l-9,-11l4,-7l10,5l4,2zM310,642l-1,3l-14,-7l4,-2l9,1zM297,657l-3,-4l2,-11l17,-24l3,4l2,11zM369,641l0,5l-10,1l-8,-5l8,-4l5,0zM392,636l7,-4l4,7l0,7l-4,0l-11,-6zM429,635l11,10l-8,3l-9,-3l-13,-13l7,-1zM456,639l-6,5l-11,-9l-1,-6l6,-3l8,6zM465,634l25,14l-9,6l-18,-3l-7,-11zM494,653l-18,-9l-4,-5l8,-4l9,6l15,11zM504,651l-6,-1l-5,-12l6,0l8,8zM507,638l13,2l2,10l-4,9l-14,-9zM529,644l-4,-11l14,0l16,5l-7,10zM576,648l2,7l-7,5l-10,-12l-1,-10l4,-4zM591,645l-9,-16l14,0l1,15zM620,639l-4,7l-8,2l3,-5zM635,657l-16,-19l2,-19l11,12l6,21zM652,654l-2,18l-16,-16l-6,-14l-3,-10l15,4zM682,640l11,-2l5,2l-5,5l-12,-1zM729,643l-4,0l-7,-6l7,-2l5,5zM755,630l7,11l-4,18l-5,-4l-4,-8l3,-11zM782,646l-13,3l-15,0l-12,-10l12,-1l13,2zM777,651l-6,-6l4,-1l7,1l1,5zM805,635l-1,8l-18,0l2,-9l3,-9zM816,640l1,-7l9,4l-3,10zM832,648l-3,-6l12,-1l9,7l-2,11l-14,-4zM848,643l-11,-4l15,-7l25,3zM864,645l-4,-7l6,-8l8,6l2,5l-5,4zM870,640l10,-1l16,-4l-1,7l-10,7l-10,-4zM904,636l22,4l2,9l-22,5l-13,-7zM974,646l3,-12l19,8l-1,11zM996,650l-3,-10l3,-4l2,2l3,10l-1,10zM1060,658l-9,-6l1,-6l4,-5l4,6zM1126,648l-7,1l-6,-2l0,-4l1,-3l10,1zM1299,674l-13,-27l2,-8l9,5l7,15zM48,655l-8,1l-16,-4l5,-8l12,3zM93,669l-3,1l-8,-6l-1,-8l7,4l6,4zM112,665l0,7l-7,3l-5,-20l6,-6zM114,658l-3,-5l4,-6l16,0l5,7l-10,2zM150,655l-5,11l-15,-1l-13,-14l8,-2zM297,659l-4,-7l0,-5l11,3zM339,677l-26,-21l0,-10l22,3l21,28zM333,663l6,-14l4,13l-7,7zM353,652l-5,-6l7,-1l5,10zM387,667l-15,-4l-10,-9l8,1l12,3zM384,664l-2,-7l5,-1l10,4l-7,2zM406,654l4,-3l3,6l-4,1zM424,667l-4,-8l3,-6l9,12zM445,667l-3,1l-8,-2l-3,-10l1,-5l12,8zM455,660l11,11l-6,5l-23,-18zM476,648l13,2l4,10l-5,2l-6,-6zM490,670l-11,-10l9,-5l9,4l0,11zM493,649l15,1l3,5l-4,5l-9,-5zM520,647l7,-8l13,15l-9,7zM540,656l14,-6l5,7l3,5l-18,5l-15,-5zM582,651l2,-4l11,7l-7,8zM599,661l6,13l-17,-7l-5,-18zM623,651l17,11l-19,6l-15,-14zM642,664l-2,-11l15,1l9,12l-5,14zM664,636l10,4l-2,21l-3,5l-8,-5l1,-15zM735,656l-7,-5l10,0l4,2l1,5zM735,658l-1,-7l19,3l-5,7zM771,655l10,-7l4,-1l4,2l2,3l-9,3zM834,667l-8,-9l-9,-11l13,2l7,11zM848,664l-6,0l-4,-11l5,-10l4,5zM871,671l-10,-3l-10,-6l12,-5l9,5zM886,652l9,0l3,2l3,4l-7,2l-9,-4zM903,659l-3,-8l7,-5l5,8l-3,6zM913,647l28,7l9,14l-18,2l-11,-5l-5,-8zM1011,659l-2,-9l13,-1l-2,11zM1039,644l10,14l-6,2l-3,0l-8,-12l-1,-5zM0,688l-9,-2l-2,-7l-2,-8l10,5l3,4zM107,679l-7,-16l16,16l3,12l-5,-1zM162,660l21,9l2,16l-7,-1l-15,-10l-4,-10zM204,672l7,-8l9,5l3,5l-1,8l-14,-5zM233,691l-17,-10l-1,-16l2,-7l13,11zM315,695l2,-18l4,-13l2,18zM389,673l5,-7l6,1l1,6l-5,0zM406,672l-11,-1l10,-5l4,1zM443,669l2,14l-7,-2l-2,-11zM464,673l-12,2l-16,-1l-1,-9l11,-2zM468,670l-6,4l-11,-4l0,-6l6,-3zM491,672l-4,-12l5,3l10,16l-7,0zM515,670l12,8l-8,5l-18,-2l-3,-9l8,-4zM570,674l-12,4l-12,-3l2,-10l15,5zM583,681l-10,-6l3,-5l6,-2l8,14zM631,672l6,0l-4,12l-10,-6l1,-8zM630,657l13,7l3,17l-9,-10zM650,671l6,5l-1,3l-4,-1l-4,-6zM673,680l2,-20l10,2l-1,11zM701,683l-5,-9l9,-6l21,6l-6,7zM718,678l-1,-7l10,-4l9,4l7,8l-13,1zM737,674l-14,-24l24,11l5,12l3,16zM769,669l-3,5l-9,1l-2,-4l1,-4l4,-1zM803,668l0,8l-7,-2l-7,-5l2,-5zM829,669l-6,3l-9,-5l0,-8l7,-4l6,9zM828,684l1,-7l2,-6l15,1l3,9l-11,7zM842,655l14,2l21,39l-28,-14zM877,686l-16,-5l-4,-8l1,-7l14,5l5,6zM897,670l4,10l-9,-6l-3,-8zM912,672l5,11l-3,7l-7,-14zM943,672l-3,12l-10,3l-5,-10l0,-9zM990,678l-3,-1l-4,-6l2,-2l4,-1l1,3zM1000,674l-7,-8l11,5l5,7l-4,2zM1002,672l8,-9l13,2l15,3l-10,7l-8,4zM1063,672l-2,4l-5,0l-5,-6l6,-3l6,0zM1141,684l-13,-11l-1,-4l5,-1l13,6l2,7zM1367,661l9,6l-2,6l-6,6l-3,-8l-4,-13zM25,696l-3,5l-12,-6l1,-8l4,-5zM58,703l-27,-9l3,-10l6,0l10,3l18,15zM125,685l-4,2l-7,-4l-4,-7l11,0l7,1zM232,688l7,13l-8,-1l-7,-11zM269,690l0,-8l16,-3l14,11zM306,669l13,10l3,10l-9,3l-4,-8zM343,691l-7,-10l6,1l9,8zM366,687l3,14l-9,-4l-5,-14zM425,696l0,-3l1,-7l4,-2l2,5l-2,4zM426,693l2,-10l23,5l6,8zM478,694l-2,8l-15,-4l-10,-20l18,5zM476,683l11,-4l1,9l-16,7l-8,1l-4,-9zM494,682l3,13l-5,12l-8,-17l0,-6zM497,682l24,1l15,7l-6,6l-21,-2zM560,678l5,15l-2,11l-9,-2l-10,-11l6,-11zM600,697l6,-11l12,-7l4,6l3,7l-6,5zM644,692l-8,-13l6,-1l10,4l5,10l-4,2zM673,687l-4,15l-6,-12l-2,-9l5,-2zM692,692l-7,-6l11,-4l22,-1zM717,696l-9,-12l11,1l13,10zM731,688l-12,-1l-3,-13l17,8zM783,682l1,11l-6,0l-9,-11l5,-11l2,-5zM777,692l-4,-14l22,7l12,3l-11,7zM808,676l10,-1l2,7l-6,17l-5,-6l-4,-10zM815,684l-2,-5l9,-1l7,5l-2,5zM845,694l-5,-1l-9,-8l0,-5l7,5zM844,689l2,-1l4,3l0,5l-3,-2l-4,-2zM883,680l6,6l-10,6l-24,11l7,-8l2,-8zM888,697l-7,-4l0,-5l7,-2l8,8zM878,683l6,-9l11,-1l3,7l0,7l-12,4zM901,684l11,-6l13,13l-10,2zM926,689l-4,-1l-3,-7l3,-1l7,4l0,5zM933,679l6,1l7,6l-1,4l-5,-1zM977,673l9,1l3,8l-2,5l-7,-6zM1016,691l-17,1l-3,-5l12,-1zM1155,681l-1,-6l16,1l7,7l-6,7zM1291,693l2,2l-3,1l-6,3l-2,-5l0,-3zM1346,692l-4,10l-6,-8l1,-6zM7,700l2,-7l7,5l2,6l0,7l-12,-6zM24,711l1,-7l11,-2l-1,9zM66,716l-19,0l10,-9l17,-9l11,4zM94,696l14,10l-14,2l-12,-8l-10,-10l11,-2zM162,700l-5,2l-8,0l0,-8l4,-1l10,1zM242,709l2,20l-21,-16l-7,-24zM262,704l-14,-7l5,-9l4,-6l8,10l0,10zM273,708l-4,-1l-9,-4l9,-1l8,2l6,3zM313,694l14,5l5,8l-9,4l-12,-6zM402,710l-12,5l-15,-12l15,0zM401,699l17,9l-13,7l-12,-12zM428,693l3,12l-6,2l-2,-10zM444,685l7,6l2,9l3,14l-11,-7l-6,-16zM465,700l2,-6l2,15l-2,4zM478,696l4,-6l16,14l-3,5zM512,705l1,12l-8,-4l-11,-9l11,-1zM527,699l8,2l-8,9l-11,-5zM543,710l-9,4l-10,-15l12,-5zM552,692l4,8l1,8l-11,-3l-11,-11l8,-3zM571,699l-2,3l-4,3l-6,-8l4,-3l6,-3zM591,706l-15,-3l0,-7l9,1zM600,712l-22,-3l4,-6l25,-1zM602,707l4,-6l16,4l8,11l-18,2zM629,688l14,12l-13,5l-6,-8zM644,715l-1,-18l5,1l2,16zM670,698l5,0l6,4l-2,10l-4,1l-5,-8zM670,687l20,5l6,9l-16,2l-18,-11zM721,705l-6,13l-14,-32l15,5zM733,711l-11,-10l6,-10l15,7zM804,712l-6,3l-5,-4l-9,-5l8,-4l9,2zM789,687l23,6l10,15l-17,3l-21,-14l3,-6zM834,697l3,-5l12,16l-7,7zM841,707l5,-8l22,10l-2,7l-15,-1zM861,705l-12,0l5,-12l9,-2l6,3l-2,10zM873,710l3,-9l9,0l2,6l-11,10zM881,699l17,5l0,6l-12,-1zM920,686l20,26l-11,-1l-9,-5l-6,-18zM932,695l11,6l7,6l-1,3l-14,-4l-2,-4zM958,696l-1,5l-10,3l-2,-8l5,-3zM982,716l-4,-9l11,-1l14,9zM1034,712l-21,-1l-14,-9l17,1zM1081,706l2,-9l4,-3l10,14l-8,-1zM1160,717l-6,-7l4,-8l10,7zM1162,701l-2,-5l16,-5l-4,12zM1253,697l1,16l-5,5l-8,-12l5,-15zM1322,708l6,-9l8,6l-3,6l-8,5zM2,710l10,-8l6,1l-8,13l-5,-1l-7,2zM76,721l1,-7l6,9l0,8l-5,-6zM81,723l-8,-5l1,-12l18,-4l6,11zM155,706l0,5l0,6l-2,5l-2,-9l-1,-9zM244,724l-8,-16l10,5l14,18zM286,708l3,4l1,7l-5,2l-1,-5l-1,-4zM295,708l7,-7l12,13l-7,3zM325,719l11,4l-5,5l-8,-2zM374,708l6,10l-17,-1l-1,-7zM397,730l-28,-4l-7,-11l24,-1l8,7zM408,725l-4,-3l2,-5l2,-6l2,4l1,8zM423,736l-7,1l-12,-13l4,-11l9,7zM415,707l13,2l14,3l3,7l-13,0l-13,-5zM443,713l9,0l6,7l3,14l-11,2zM468,710l2,-4l16,-1l3,6l-2,5l-12,1zM512,719l-18,0l-15,-11l24,5zM495,717l13,-2l24,12l-13,4zM521,705l16,9l1,9l-4,2l-8,-1l-13,-16zM583,716l4,5l-9,4l-11,-12zM585,702l9,3l11,18l-13,1l-11,-11zM620,712l10,11l-14,-4l-15,-8l5,-12zM616,710l13,0l2,7l-6,0zM670,728l-18,-10l-1,-5l8,-2zM695,715l2,5l-15,5l-1,-9zM690,718l9,-3l5,9l5,4l-9,0l-5,-4zM723,727l-22,-15l16,-7l21,23zM737,698l12,15l-5,7l-11,-3l2,-12zM778,721l-9,-3l1,-7l4,-4l5,4zM799,733l-5,-9l2,-11l6,-11l4,12zM841,698l18,9l3,12l-1,7l-12,-15zM867,707l7,7l6,10l-10,0l-7,-8zM872,718l15,-16l10,3l-15,18zM903,726l-4,-1l-7,-2l5,-6l9,6zM925,701l11,11l-2,6l-3,6l-13,-7l-4,-20zM1043,722l-9,1l-23,-15l8,-4l15,4zM1051,710l4,4l-8,0l-4,-4l4,-3zM1063,726l-7,4l-5,-8l5,-3zM1220,712l23,-2l13,11l-25,3zM64,721l8,-2l3,11l1,10l-7,-2l-5,-13zM93,729l-12,-15l22,-1l15,16l5,7l-12,1zM113,721l14,2l11,7l-2,7l-15,-6zM142,727l4,-2l5,-1l1,8l-3,3l-8,-3zM158,732l9,4l5,2l-7,3l-4,-1l-3,-2zM387,718l7,8l-12,5l-10,-4l2,-4zM520,720l3,13l-4,14l-5,-11zM552,740l-17,-14l6,-2l4,-4l10,3l3,13zM574,727l2,3l0,5l-5,-2l-1,-5zM576,727l0,-4l12,-1l2,2l-5,7l-9,-1zM600,735l7,6l-17,0l-12,-10l16,1zM623,726l-1,15l-17,-4l-3,-18zM626,736l2,2l0,8l-4,-3l-8,-4l3,-2zM719,731l-2,5l-14,-5l1,-7l8,-3l12,3zM771,725l2,8l-18,-4l-18,-7l15,-2zM770,719l26,19l-9,10l-25,-19zM812,739l-4,3l-10,-7l4,-3l7,2zM824,733l-6,4l-5,-7l9,-2zM835,727l-1,11l-4,1l-3,-8zM861,746l8,-12l15,-5l1,7l-12,8zM905,732l7,3l3,8l-8,-6zM938,735l-14,-3l-3,-13l9,5zM943,737l1,12l-13,-7l-6,-13l12,1zM946,721l18,3l-1,6l-25,1l0,-8zM989,734l-7,-9l7,-4l8,4l-1,6l-4,5zM12,745l6,1l1,13l-6,-4zM33,745l-9,5l-11,-1l13,-6zM24,739l19,0l15,3l4,12l-22,-7zM91,742l-4,3l-9,-3l0,-8l15,3zM103,751l1,-11l16,-2l12,17zM145,743l8,-1l7,3l2,6l-14,-1zM173,741l2,-2l8,6l-5,2zM203,749l30,2l-2,12l-31,-6zM221,746l-1,10l-13,0l7,-19zM290,750l-13,4l0,-12l4,-5l10,4zM318,749l-12,-2l7,-7l9,1zM324,753l-13,-5l5,-12l13,1zM394,752l-7,0l-8,-4l2,-4l9,3zM400,750l-20,-9l26,-6l17,7zM419,745l7,0l3,6l-12,3zM445,738l11,22l-12,-1l-11,-14l7,-7zM483,746l-11,-4l-2,-10l10,8zM507,744l2,7l-6,-2l-7,-5l4,-4zM557,737l6,8l2,6l-4,11l-3,-10zM654,743l7,6l8,9l-7,3l-19,-13l1,-9zM675,748l12,3l1,4l0,6l-10,-2l-6,-7zM727,744l15,13l-6,5l-34,-11l-15,-12l22,0zM784,758l-8,-2l-7,-7l6,-4l4,6zM847,759l-22,-5l-4,-17l20,7zM851,745l4,-1l3,0l3,5l-6,4l-2,-3zM867,751l11,4l-3,2l-8,0l-8,-3zM908,743l9,3l-4,10l-6,6l-1,-7zM928,758l-8,-1l-5,-7l9,-6l5,7zM935,747l6,-6l7,3l6,8l-16,3zM1113,744l9,4l1,14l-8,-8zM1221,740l10,-1l4,1l-1,8l-11,2l-5,-4zM-3,755l11,4l2,5l-6,1zM-1,763l2,-8l26,4l-9,7l-12,4zM29,763l-8,-4l1,-7l8,4zM87,768l-7,1l-7,-3l3,-2l6,-1zM155,761l-5,12l-6,-11l5,-9zM187,762l-9,1l-15,-10l12,-2zM187,769l-1,-8l13,0l-1,13zM255,769l-22,-6l8,-11l29,0l10,12zM307,771l-2,6l-13,-9l4,-4l14,2zM366,761l-5,6l-4,-5l2,-7zM367,747l12,5l5,10l-10,-2zM512,749l10,9l-20,4l-17,-9zM533,767l-7,0l-3,1l-8,-3l4,-7l5,3zM565,759l-5,10l-18,-3l-23,-7l24,-4zM588,764l-6,-2l-5,-5l4,-4l8,3l7,7zM672,758l9,7l-6,6l-15,-13zM685,763l16,-5l17,14l-20,3zM712,756l6,5l-2,7l-10,-6l2,-4zM737,768l-24,-2l6,-9l24,0zM795,762l7,14l-10,-6l-6,-6l1,-7zM834,762l-4,1l-4,-6l1,-4l7,5zM859,772l-6,-9l6,2l6,3l-1,8zM872,750l8,13l-2,11l-8,-4l-9,-6l2,-7zM890,775l-7,-15l0,-13l14,13l-1,12zM902,766l-9,4l-1,-24l8,-1l8,0l-1,19zM957,755l7,5l11,11l-3,3l-10,-2l-12,-12zM973,755l6,7l4,6l-6,3l-7,-4l1,-8zM1089,775l4,-9l12,-4l9,8l-12,4zM1126,748l5,1l11,11l0,8l-5,2l-7,-8zM91,787l-11,-10l-8,-10l22,9l2,9zM125,776l6,11l-26,4l-21,-3l24,-13zM154,762l3,-7l16,16l-2,14l-15,-7zM209,777l5,3l2,6l-7,1l-4,-7l-1,-1zM387,780l4,-10l10,9l-6,9zM406,786l-2,-11l10,3l2,10zM432,786l-12,9l-6,-12l18,-7zM437,771l6,3l3,5l-2,3l-8,0zM460,784l-8,-2l-4,-16l9,3l15,15zM479,769l6,4l-6,11l-10,-10zM484,781l-3,-3l6,-6l6,3l-2,6zM530,776l-8,-5l-3,-2l6,-3l3,3l2,4zM543,788l-10,-4l-1,-7l7,0l9,9zM583,788l-8,8l-12,-24l0,-15l9,11zM583,783l-7,2l-6,0l-2,-9l8,-1l7,-1zM578,780l11,-5l25,9l-17,3zM614,775l9,7l3,10l-8,-3l-10,-6l-5,-6zM654,766l9,10l-7,11l-12,-16l-7,-18zM647,775l6,-7l9,1l-1,3l-12,11l-5,1zM710,771l-10,12l-17,13l1,-14zM776,775l6,-1l10,3l2,7l-8,-2zM798,781l8,-3l9,2l2,5l-10,5l-11,-3zM866,777l-2,-9l5,-4l3,11zM883,786l-4,-6l0,-9l8,2l7,7l-5,8zM885,764l10,2l5,3l-6,8l-6,-4l-1,-2zM953,778l10,-2l6,9l4,8l-20,-5l-9,-5zM975,778l-21,0l11,-9l15,2zM979,769l11,4l6,7l-9,-1l-17,-4zM1201,789l5,-7l9,-4l1,3l-1,7zM1226,769l5,11l-16,-6l-2,-12zM1313,793l-9,-24l4,-4l6,9zM8,783l9,2l4,7l-9,-2l-4,-2zM35,803l-7,-1l-7,-3l-1,-8l7,1zM48,800l-20,-2l7,-6l18,1zM43,791l1,-8l2,-2l13,4l2,8l-7,3zM94,801l-12,-6l-3,-18l14,9l10,12zM99,792l3,1l0,5l-2,2l-2,-4zM116,785l2,-2l0,-3l11,3l-1,5l-5,2zM135,790l6,3l0,8l-9,4l-2,-6zM153,791l-11,3l-13,-11l4,-6l22,3l3,8zM178,794l5,-7l7,12l-8,8zM240,784l9,10l-46,5l16,-12zM245,782l8,10l-3,8l-12,-9l-7,-5l3,-6zM257,792l-8,-3l1,-8l3,-1l7,4zM333,790l-1,-6l4,-2l2,6zM391,793l3,4l2,5l-6,-1l-6,-5zM403,801l-15,-19l15,0l16,22zM453,779l7,9l-1,9l-8,1l-7,-11l-3,-8zM455,802l-1,-6l7,-4l5,2l4,8l-5,0zM482,793l-5,9l-10,-10l11,-9zM500,799l-14,-4l-5,-10l15,0l15,12zM505,781l6,9l-5,4l-5,-10zM516,797l12,-3l8,9l-7,2zM599,796l-6,1l-16,-4l-2,-6l14,0l4,4zM594,795l-5,0l-2,-13l6,5zM714,804l-4,-12l11,5l3,8zM728,786l11,7l0,6l-9,-1zM745,789l0,-6l15,1l2,4l-2,5zM756,778l10,4l1,21l-5,-4zM789,801l-1,-3l1,-4l6,-2l3,3l-3,7zM816,791l6,10l-10,-1l-12,-3l5,-9zM919,784l14,10l-12,4l-11,-5l-6,-8zM925,774l24,16l-12,2l-27,-16zM1028,791l-3,-5l11,4l1,7zM1364,795l-16,-3l-4,-3l13,-3l11,0l4,3zM54,800l3,-10l5,6l7,5l-2,6l-14,2zM81,804l13,16l-11,-1l-24,-20zM95,815l-4,-4l0,-3l7,1l2,2l-1,3zM138,814l-9,-4l7,-3l10,2l5,5zM173,807l5,20l-19,-17l-8,-20l13,9zM194,813l-18,-12l11,-1l8,7zM236,798l10,6l-10,7l-6,-10zM385,809l5,-1l7,3l0,7l-8,-4zM435,815l-6,-11l5,-6l7,-3l5,8l-4,12zM450,804l5,-1l12,15l-7,-1zM501,814l-9,-7l7,-12l10,13zM542,821l-1,14l-9,-20l5,-11l7,4zM550,810l6,0l2,5l-6,4l-10,1zM621,803l11,8l-1,6l-13,0l-6,-5l-1,-10zM639,814l-10,5l-4,-5l-3,-6l14,1zM681,808l6,3l5,6l-8,-2l-5,-2l-7,-5zM744,802l30,-5l13,5l-1,9l-34,6l-12,-8zM778,818l-2,-20l9,-3l-1,16zM859,809l-11,0l-5,-11l6,1zM856,804l6,4l5,3l-4,4l-5,1l-6,-5zM914,822l-14,-5l-14,-9l11,-3l10,6zM922,813l-7,1l-9,-1l10,-3zM922,810l-12,-8l6,-8l11,6l6,17zM1176,806l10,11l-13,2l-11,-5l3,-6zM-14,814l4,-3l10,9l-1,5l-11,-2zM25,823l-10,1l-5,0l-8,-18l11,1zM106,838l-9,-24l8,-11l11,18l1,20zM140,829l-7,2l-11,-1l5,-6l9,0l6,3zM167,815l-3,6l-5,-3l1,-8zM246,823l-7,-6l0,-3l8,0l8,4l-3,3zM292,842l-22,-8l-11,-7l1,-10l19,7l7,6zM298,827l3,3l-2,6l-6,-4l-5,-5l1,-3zM310,815l21,13l6,18l-34,-14zM436,822l2,-10l3,-5l14,19l-8,1zM493,833l-5,3l-11,-11l2,-4l5,0zM504,822l-1,11l-9,-8l-8,-14zM534,826l-13,-3l-9,-18l12,4zM542,810l7,1l9,8l-2,11l-6,-1l-5,-8zM569,816l9,5l8,17l-9,4l-8,-13zM594,828l-6,-7l1,-5l10,10zM612,832l-2,-9l3,-5l19,7l-11,5zM620,825l-3,-7l1,-3l7,2l-1,8zM658,832l-5,-5l-1,-6l10,3l13,6l-7,3zM682,827l-14,-8l1,-4l22,5l9,6zM704,818l9,15l-5,9l-9,-12zM719,822l1,8l-9,0l1,-5zM735,832l-21,-6l9,-8l19,8zM764,822l12,8l-6,4l-11,-10zM769,823l4,-5l4,0l-2,5zM832,822l3,8l-6,0l-9,-6zM835,819l6,3l-3,4l-4,2l-2,-5zM877,828l-13,-9l6,-7l6,2zM908,832l-13,-6l0,-12l0,-9l10,12l6,5zM1068,817l10,0l1,6l-12,1zM1188,818l5,1l5,7l-6,3l-5,2l-1,-4zM30,827l-1,11l-14,1l-19,-9l8,-7l6,-4zM59,840l-10,-5l-2,-6l2,-4l15,6l3,7zM69,823l7,-1l9,15l-11,8l-13,-12zM150,825l9,0l9,14l-14,-3l-8,-5zM189,837l2,-5l9,-3l3,4l-9,5zM259,832l16,2l9,9l-7,2l-17,-2l-7,-10zM301,850l-10,-17l-2,-23l13,17zM348,834l-1,9l-10,-1l4,-8zM439,827l19,2l0,6l-23,1zM483,835l-2,-5l8,-1l6,4l-4,7zM512,838l7,9l0,7l-5,2l-8,-16l-2,-9zM527,841l-5,-1l-2,-5l7,-1zM546,815l17,14l5,17l-13,-4l-9,-5l-3,-15zM594,831l-5,2l-4,-1l-1,-4l6,-2zM610,839l0,-7l10,-4l10,5l-7,5zM630,840l12,1l-5,5l-5,3l-5,-4l0,-5zM644,836l2,2l1,5l-9,1l-2,-5l-1,-5zM671,850l-7,-2l-4,-13l7,-4l5,7zM690,857l-15,-17l-1,-20l10,2l4,6l7,24zM681,831l22,9l3,13l-17,-10zM720,837l-6,-5l2,-5l9,-2l8,6l1,4zM736,842l-2,-6l1,-2l5,4l2,7zM755,838l-2,6l-14,-6l-9,-8l4,-2l18,6zM-20,854l14,0l6,7l-14,-2zM92,850l-7,-5l12,-5l6,5l5,3l-8,5zM207,858l-9,3l-6,-6l5,-9zM206,849l-4,-7l14,1l10,10l-7,2zM253,863l-20,-15l4,-5l11,7zM246,861l-3,-10l2,-3l4,3l2,8zM265,845l10,2l17,7l2,8l-7,2l-17,-10zM365,854l-18,5l5,-15l18,3zM384,844l10,-8l4,15l-10,6zM405,854l-5,-9l13,-3l9,16zM432,856l4,-8l5,3l3,8l-6,2zM487,855l8,-10l18,8l-15,13zM532,862l0,10l-11,-9l-7,-7l4,-8zM550,843l10,1l0,7l-5,8l-3,-5l-4,-5zM566,843l8,6l3,10l-12,-2zM592,854l-2,4l-12,-2l-5,-4l6,-2l8,-1zM597,843l2,3l-9,6l-10,-2l7,-6zM604,846l8,-3l9,6l4,9l-3,4l-14,-11zM625,841l2,-6l13,14l2,9l-2,9l-9,-13zM648,863l-23,-17l6,-5l15,12zM690,867l-9,-1l-8,-13l-4,-10l15,0l9,10zM698,846l5,-1l4,1l3,10l-9,3l-1,-7zM731,848l4,7l-3,4l-5,1l-3,-8l4,-6zM776,850l12,-2l-4,10l-10,-2zM866,850l-7,7l0,-11l5,-8zM958,852l6,7l3,7l-13,-4l-3,-2l-1,-4zM-13,872l0,-3l4,-1l7,3l-1,4l-4,4zM35,867l-4,0l-1,-3l4,-5l10,0l0,7zM48,870l-7,-17l10,-1l9,4l-6,13zM59,864l15,3l10,9l-21,0zM114,860l17,7l11,5l-22,1l-11,-6zM159,860l8,7l-8,2l-7,-8zM180,876l-3,5l-9,-13l3,-7zM209,879l-8,-2l0,-5l2,-6l7,8zM212,844l25,12l-1,11l-2,7l-15,-11l-4,-8zM235,866l22,5l-8,9l-13,-6zM279,853l4,-1l5,16l-1,6l-6,-12l-5,-4zM316,861l5,4l1,8l-10,-5l-13,-11zM388,865l-4,-2l5,-3l4,-1l-1,3l-2,3zM395,845l10,12l2,25l-11,-9zM417,879l-8,-21l13,12l1,7zM425,866l5,-1l3,10l-9,-1zM462,878l-5,4l-9,-4l2,-10l7,-1l11,4zM478,878l-8,-9l11,-6l8,13zM508,884l-10,-20l-1,-20l13,14l10,26zM510,868l3,-9l12,3l8,7l-9,7l-15,-5zM554,869l-6,-2l4,-2l10,0l1,5zM558,859l13,-3l20,12l1,9l-10,2l-17,-14zM609,867l-2,8l-7,-2l-6,-2l0,-4l5,-5zM630,872l-5,-2l2,-3l5,-1l3,5l-1,3zM650,858l8,11l-5,2l-6,-9zM710,870l-28,6l-15,-12l27,-7zM712,861l5,18l-5,-2l-5,-2l-11,-18l11,5zM766,867l-5,7l-6,-1l-1,-3l8,-5zM794,864l-1,-1l5,-2l5,3l-3,2l-4,3zM824,866l8,10l-21,-5l-15,-9l12,-5zM844,862l-4,3l-6,-3l1,-6l7,-3zM1039,863l15,0l-6,9l-11,-2zM1315,861l11,-6l14,5l9,7l-14,4l-14,-1zM12,895l-11,-12l-6,-14l14,9zM74,878l14,-4l18,14l13,9l-19,1zM128,882l5,11l-6,-2l-5,-5l-4,-6l4,-2zM132,886l8,2l0,3l-2,2l-7,-3l-3,-5zM195,883l-31,6l-5,-9l30,-4zM196,888l-8,-1l-3,-4l0,-6l9,1l5,4zM194,874l21,3l3,12l-7,5l-18,-6l-7,-10zM227,877l1,4l-2,3l-7,-2l1,-4zM235,877l13,11l7,5l-13,0l-14,-6l-12,-8zM266,889l6,13l-7,7l-12,-23l-1,-9l6,-3zM299,882l-2,3l-9,-3l4,-4l0,-5l7,6zM325,872l13,16l-1,8l-5,5l-15,-15l1,-12zM381,882l14,5l5,6l-11,-1zM393,871l5,10l5,11l-4,5l-3,-6l-2,-6zM419,882l17,2l7,12l-15,-1zM497,870l14,4l7,7l-15,-1zM551,879l-2,6l-11,1l6,-12zM596,878l12,-7l18,9l-11,6l-18,-3zM628,886l-14,-6l-4,-6l2,-7l9,1l6,8zM668,888l-11,-1l-7,-12l14,-6zM688,882l15,0l-2,8l-8,4l-13,-6zM709,885l-7,9l-10,-12l15,-5zM758,892l-16,-8l7,-4l8,-1l7,4l2,11zM788,875l13,2l-8,9l-14,1zM888,883l-1,4l-5,1l-7,-11l5,-2l5,1zM965,876l7,6l-6,3l-4,-3l-1,-5zM1077,895l-8,-5l-6,-13l12,2zM1093,865l11,20l-10,3l-4,-4l-7,-13l5,-2zM1226,889l-17,-6l1,-11l10,0zM1231,892l-2,-8l6,-4l9,3l-8,6zM1252,888l-9,-11l3,-6l7,2l5,10zM1312,881l5,5l1,8l0,5l-10,-5l1,-9zM-2,902l-3,-4l-1,-6l2,-5l4,6l0,8zM64,899l-3,-2l1,-3l0,-6l6,6l-1,5zM93,895l-2,-1l0,-3l3,-5l2,5l1,5zM144,888l4,15l-11,2l-8,-15l7,-11zM170,893l-4,6l-9,-3l2,-11l8,4zM192,899l-6,9l-13,-3l0,-10l13,-3l6,1zM253,884l9,-12l13,14l4,14l-11,0zM266,905l0,-11l17,-13l-1,13zM308,896l-16,2l-6,-10l16,-3zM349,902l-8,-3l-3,-5l11,-2zM361,889l9,3l-8,4l-8,-5zM355,885l13,-4l12,15l-1,8zM396,902l2,4l-6,-2l-3,-7zM428,882l10,-12l1,19l-4,17l-10,-1l-6,-13zM454,887l7,4l2,3l-2,4l-8,-3l-3,-4zM488,882l23,11l-8,9l-24,-11zM508,888l7,6l8,9l-9,1l-10,2l1,-11zM561,890l7,9l3,10l-10,-7l-1,-4l-4,-14zM631,907l0,17l-13,-4l-10,-24l3,-10l15,6zM617,888l15,-1l11,13l-15,4zM688,902l-6,-9l3,-4l6,4l8,14l-6,-3zM695,887l19,9l-4,7l-7,4l-8,-5l-9,-7zM907,906l-5,14l-12,-21l8,-7zM941,899l-5,-3l1,-8l3,-3l6,4l0,6zM1073,909l0,-8l4,-3l1,10zM60,902l7,-2l8,4l1,7l-12,-1zM130,909l-17,-2l10,-6l14,-1l6,6zM199,914l-4,1l-3,-8l1,-9l6,0l5,17zM251,911l-3,4l-3,-2l-2,-7l6,-6zM332,902l10,3l8,3l-8,6l-4,4l-7,-10zM368,911l19,4l-7,8l-14,-5zM396,899l14,12l2,12l-11,-5l-6,-7zM474,916l-9,9l-1,-16l5,-8l5,5zM481,891l3,20l-8,8l-2,-15zM540,916l-10,3l-13,-4l-1,-5l11,-3l14,6zM573,906l10,11l-2,14l-8,-9l-8,-8zM586,920l2,-5l4,-3l4,2l2,5l1,3zM648,920l-2,-7l3,-2l8,9zM652,925l-2,-17l9,-6l9,12l-6,10zM698,908l2,-3l5,1l4,6zM727,916l-8,-7l9,-7l11,1l6,7l-9,6zM762,902l-9,8l-14,6l-6,-1l1,-9l11,-8zM891,908l18,11l-3,12l-20,-15zM1001,908l10,10l-5,0l-9,-4l-7,-14zM1145,903l9,12l-9,-1l-12,-15zM1244,913l-7,2l-8,-8l5,-9l14,9zM1296,907l11,-4l0,7l-3,5zM168,937l-2,6l-7,-5l-6,-7l9,-6l4,6zM162,914l-1,-11l16,17l4,9l-6,4l-8,-8zM250,931l-7,3l-16,-4l4,-11zM249,926l2,-4l17,-1l-6,7zM337,919l7,17l-22,-13l-1,-11zM359,926l5,12l-9,2l-19,-12l-2,-10zM362,933l5,-8l17,10l6,6l-18,0zM384,920l6,-1l9,12l-6,1zM523,919l0,4l2,4l-4,2l-4,-5l0,-5zM579,923l-12,8l-22,-5l5,-8zM560,932l-4,-9l2,-1l3,1l5,5l2,4zM600,930l-12,-6l4,-5l11,3l1,5zM745,938l-8,-8l-3,-9l8,2l2,7zM764,918l22,3l17,2l2,8l-15,2l-13,-7zM986,924l-4,1l-6,-2l2,-4l4,0l4,1zM1065,924l7,0l-1,9l-10,-3zM1157,927l0,5l-11,-1l1,-3l3,-4zM1334,936l-4,8l-14,-12l0,-14l10,-1l11,13zM82,936l5,9l-14,4l-3,-13zM113,953l-8,-5l-1,-5l9,-2l8,5l-3,5zM131,942l-4,-2l3,-5l5,2l3,4l5,8zM230,944l-11,3l-12,5l-14,-6l3,-10l14,3zM255,931l10,6l3,3l0,8l-16,-4l0,-7zM323,945l-6,3l-2,-9l5,-8l7,9zM330,943l11,0l1,10l-12,0zM359,931l10,17l-8,9l-10,-18zM374,935l9,5l-16,7l-12,-9l7,-5zM395,960l-7,-4l-12,-12l5,-3l7,-4l5,11zM422,943l-14,-4l-1,-10l9,1l11,11zM480,948l6,-13l7,-2l7,5l-10,8zM507,936l8,-8l18,18l-10,2zM671,938l-19,11l-19,5l-5,-5l21,-9zM748,926l17,9l3,12l-25,-9zM813,944l-3,-9l9,-4l6,5l-4,4zM859,942l-8,2l-10,-9l5,-8l25,8zM1149,947l-9,-2l-1,-11l2,-4l10,-1l-2,10zM1170,953l-4,-6l7,-5l8,3zM215,971l-5,-17l6,-3l4,18zM239,949l5,3l3,5l-8,0l0,-3zM479,966l-11,-9l-5,-10l3,-2l5,5l8,10zM499,968l-10,6l2,-16l5,-7l9,2zM520,949l13,1l10,9l-30,-1zM538,961l11,8l-10,1l-9,-2l-10,-7l7,-4zM565,959l0,8l-13,-6l5,-4zM782,963l-2,8l-4,-3l-5,-8l6,2zM925,969l-9,3l-8,-12l12,0l8,3zM1134,954l1,6l-13,1l-4,-7l7,-9zM1194,978l-8,-12l1,-13l11,4l-3,14zM1244,955l-16,1l-9,-4l-1,-7zM1263,952l10,1l-4,5l-10,6l-2,-6zM1350,953l-12,6l-2,-12l13,-2zM138,966l-5,-11l23,7l2,11l-9,0zM466,975l-7,-2l-12,-7l3,-10l13,5zM476,973l10,-2l18,2l-5,5l-22,4zM627,977l-9,-2l-1,-9l6,1l3,3zM706,972l4,-5l8,-4l-4,11l-5,3zM1005,979l2,-14l14,11l8,12zM1195,992l-25,-12l-18,-19l22,8zM1221,990l-4,-22l7,1l4,6l2,17z" fill="#f0fcf4" style="mix-blend-mode:multiply"/>
<!-- sea top right -->
<path d="M1011,252 L1020,285 L1029,323 L1040,400 L1060,600 L1356,700 L1356,735 L1366,746 L1366,252 Z" fill="#b3d1ff"/>
<!-- sea bottom-left -->
<path d="M0,911 L15,915 L45,935 L70,966 L0,966 Z" fill="#b3d1ff"/>
<!-- purple lakes -->
<path d="M86.8,811.8 L96.6,797.5 L109.8,791 L123,792 L131.8,788.7 L134,796.4 L143.9,805.2 L145,816.2 L140.6,826 L131.8,831.5 L105.4,831.5 L92.2,825 L86.8,818.4 Z" fill="#c49ac0"/>
<path d="M156,820.6 L162.5,816.2 L164.7,826 L157,827 Z" fill="#c49ac0"/>
<path d="M74,668 L80,661 L86,664 L95,661 L99,670 L96,682 L86,688 L77,684 L73,676 Z" fill="#c49ac0"/>
<path d="M120.8,400 L129,380 L131.8,374.5 L146.4,372.6 L139,389 L130,398 L124.5,403.7 Z" fill="#c49ac0"/>
<path d="M704.6,505 L723.6,501 L742.7,520 L739,524 L723.6,524 L712.2,535.5 L704.6,531.7 L708.4,516.5 Z" fill="#c49ac0"/>
<!-- thin roads -->
<g fill="none" stroke="#eca24a" stroke-width="2" stroke-linejoin="round">
  <path d="M14.6,480 L19.2,491 L14.6,505.6 L18.3,528.5 L42,588 L27.5,620 L22,636.6 L25.6,655 L22,669.5 L36.6,684 L73.2,713.5 L135.4,739 L157.4,755.6 L186.7,814 L191,831.5 L192.2,870 L219.6,885.5 L234.3,903.8"/>
  <path d="M0,503.8 L14.6,505.6"/>
  <path d="M42,588 L78.7,575.2 L124.5,569.7 L173.9,581.6 L205,576 L239.8,549.5 L250,524 L268,510 L296.5,491.6 L311,493.4 L340.4,484 L362.4,482.4 L384.3,469.6 L377,414.7 L380.7,385.4 L383,380 L394.7,359.5 L403.5,345.2 L395.4,319.7"/>
  <path d="M300,493.6 L323,492.7 L337.3,483 L362.2,484 L367,481.2 L373.7,473.5 L379.5,472.5 L384.2,463 L383.3,440"/>
  <path d="M355.5,488.8 L361.3,503.2 L384.2,526.2 L410,576 L409.1,599 L413,612.3 L426.4,621 L445.5,621 L485.7,620 L501,630.5 L531.7,630.5 L543.2,619 L560,607.5 L620,641.8 L648.5,659 L673.3,649.5 L677,643.7 L694,640.9"/>
  <path d="M203,257 L208.6,297.6 L205,323 L210.5,328.7 L190,345 L183,356 L157.4,376 L135.4,381.8 L106,403.7"/>
  <path d="M212,327 L234,352.5 L245,378 L263.5,381.8 L285.5,387 L287.3,407 L280,436.7 L296.5,491.6"/>
  <path d="M28.6,680 L65.9,702 L83.5,717.3 L118.6,733.8 L134,739.3 L140.6,748 L156,755.8 L186.7,814"/>
  <path d="M226.2,680 L228.4,702 L253.7,741.5 L246,767.9 L247.1,794.2 L254.8,798.6 L257,833.7 L249.3,847 L256,903"/>
  <path d="M445.5,621 L447.4,640 L449,691.7 L431.9,733.8 L433,752 L408,776 L395,777 L370,790 L345,800"/>
  <path d="M677,642.8 L685.7,614.2 L688.5,608.5 L713.3,601.9 L707.6,578 L713.3,571.4 L714.2,560 L705,530 L706,500"/>
  <path d="M686.6,605.7 L681,592.4 L667.6,581 L661.9,560 L645,535 L620,520"/>
  <path d="M719,651.4 L745.6,661 L821.7,676.1 L837,674.2 L880,706.6 L910,740"/>
  <path d="M743.7,662.8 L764.7,683.7 L764.7,700.8 L787.5,708.5 L793.2,720"/>
  <path d="M696,666.6 L703.7,693.2 L734.2,718"/>
  <path d="M751.3,645.6 L762.7,661"/>
  <path d="M699.4,710.5 L724,732.8 L747.4,735 L761.4,744.5 L763.8,750.4 L777.8,744.5 L788.4,736.3 L800,752.7 L800,800.7 L797.8,813.6 L806,833.5"/>
  <path d="M712,700 L738,721 L746,732.8"/>
  <path d="M770.8,703.5 L788.4,709.4 L808.3,735 L807,743.3 L801.3,750.4"/>
  <path d="M598.7,807.8 L613.9,814.8 L623.2,817 L635,839.4 L642,840.5 L663,852.3 L667.8,854.6 L688.8,866.3 L714.6,853.4 L726.3,855.8 L747.4,878 L749.7,900 L745,940 L752,966"/>
  <path d="M545,966 L560,940 L600,930 L640,920 L690,930"/>
  <path d="M256,903 L300,890 L330,900 L360,905 L420,900 L450,890"/>
  <path d="M883,433 L905,410 L940,395 L1000,398"/>
  <path d="M925,448 L960,440 L1000,430"/>
  <path d="M905,480 L930,500 L950,497 L975,505 L1000,520"/>
</g>
<!-- yellow roads in green -->
<g fill="none" stroke="#d8c95a" stroke-width="2">
  <path d="M377.3,253 L381,277.4 L396.6,303.5 L395.4,319.7"/>
  <path d="M655,520 L659,486 L662.7,440 L660.8,398.5 L678,360.4 L687.5,347 L739,352.8 L784.5,322.3 L811,303.3 L860.7,299.5 L902.5,291.9 L936.8,282.4 L978.7,261.4 L994,254"/>
  <path d="M994,254 L1005.6,273 L1009.4,300 L1019,323"/>
  <path d="M918,670 L922,690 L930,697 L950,690 L965,720"/>
  <path d="M851.7,862 L866.5,887 L868,909 L884,931.5 L901.5,946 L899,956 L905,966"/>
  <path d="M740,870 L760,890 L765,920 L770,966"/>
  <path d="M906,815 L925,808 L940,790 L962,780 L975,800 L981,790"/>
</g>
<!-- major roads -->
<g fill="none" stroke="#e8915a" stroke-width="5.5" stroke-linejoin="round" stroke-linecap="round">
  <path d="M0,258.5 L3.5,269 L7,285 L10.6,313.4 L12,330 L26.5,354 L60,377 L80.4,395.5 L103.4,403.2 L111,422.3 L114,441 L117.7,465.7 L124.5,498.3 L131.8,524 L146.4,536.7 L172,558.7 L181.2,564.2 L201.3,569.7 L216,582.5 L238,615.4 L242.4,623.8 L242.4,662.4 L256.5,680 L263.5,699 L285.5,710 L307.5,728 L313,746.4 L314.8,772 L322,790 L313,819.6 L300,838 L282,860 L276.4,903.8 L274.5,922"/>
  <path d="M322,790 L322,805 L329.4,849 L351.4,885.5 L355,918.4 L369.7,936.7 L384.3,951.4 L400,966"/>
  <path d="M220,922 L240,915 L268,911 L290,925 L305,945 L315,966"/>
  <path d="M424.6,966 L439,936.7 L453.9,900 L472,885.5 L502.8,874 L525.7,881.7 L537,859 L560,840.5 L569.4,821.8 L583.4,819.5 L587,810 L604.5,799.6 L623.2,800.7 L635,793.7 L666.6,796 L677.1,770.3 L684.2,746.8 L694.7,723.4 L692.3,720 L685.7,683.7 L693.3,657 L701.8,651.4 L713.3,653.3 L720,643.7 L764.7,626.6 L780,621 L791.3,601.9 L810.3,600 L818,594.3 L831.3,575.2 L844.6,562"/>
  <path d="M666.6,798.4 L686.5,821.8 L724,847.6 L745,861.6 L763.8,864 L789.6,854.6"/>
</g>
<g fill="none" stroke="#c8b878" stroke-width="5.5" stroke-linejoin="round" opacity="0.85">
  <path d="M844.6,562 L860.7,543 L883.5,516.5 L906.4,486"/>
  <path d="M789.6,854.6 L817.7,859.3 L851.7,862 L866.5,867 L899,887 L936,883 L961,894.4 L978.7,867 L981,785"/>
</g>
<g fill="none" stroke="#e8915a" stroke-width="5.5" stroke-linejoin="round">
  <path d="M906.4,486 L910,474.6 L923.5,459 L925.4,448 L914,436.5"/>
</g>
<!-- dashed boundaries -->
<g fill="none" stroke="#8a5a60" stroke-width="1.6" stroke-dasharray="9,6" opacity="0.55">
  <path d="M0,429 L14.6,436.7 L36.6,422 L58.6,433 L80.5,416.5 L98.8,425.7 L113.5,434.8 L140,450 L160,470"/>
  <path d="M300,623.8 L315.3,614 L321,572 L334.5,567.3 L338.3,584.6 L351.7,583.6 L369,572 L378.5,572 L387.1,565.4 L372.8,545.3 L380.4,537.6 L403.4,533.8 L404.3,520.4 L426.4,518.5 L443.6,506 L466.6,498.4 L468.5,486 L460.8,474.5 L461.8,464 L468.5,460.1 L485.7,468.7 L491.5,459.1 L531.7,458.2 L536.5,445.7"/>
  <path d="M190,580 L215,575 L225,600 L240,610"/>
  <path d="M560,700 L600,710 L620,760 L660,780 L700,800"/>
  <path d="M570,790 L560,820 L590,850 L620,880 L700,920"/>
</g>
<g fill="none" stroke="#6c8a6c" stroke-width="1.6" stroke-dasharray="9,6" opacity="0.55">
  <path d="M625,481 L620,440 L630,400 L650,350 L700,310"/>
  <path d="M550,310 L600,330 L650,340 L700,360 L740,380 L780,360 L820,330 L850,290"/>
</g>
<!-- shields -->
<g fill="#6e8c5e">
  <path d="M148.2,543.1 L161,539 L173.9,542.2 L173.9,557.8 L161,560.2 L148.2,557.8 Z"/>
  <path d="M297,735 L309.5,731.5 L322,735 L322,750 L309.5,752.5 L297,750 Z"/>
  <path d="M263,838 L286.5,835 L310,838 L310,853 L286.5,856 L263,853 Z"/>
  <path d="M659.6,752.5 L676,749.7 L692.8,752.5 L692.8,767.5 L676,770.3 L659.6,767.5 Z"/>
  <path d="M447,908 L461.5,905 L476,908 L476,923 L461.5,926 L447,923 Z"/>
  <path d="M255,905 L270,902 L285,905 L285,920 L270,923 L255,920 Z"/>
  <path d="M892,474 L908,471 L924,474 L924,489 L908,492 L892,489 Z"/>
  <path d="M6.2,325 L18.5,322 L31,325 L31,336 L18.5,338.5 L6.2,336 Z"/>
</g>
<path d="M817,851 L833.5,848.7 L850.5,851 L850.5,868 L833.5,870.3 L817,868 Z" fill="#3aa37a"/>
<path d="M1001.6,727 L1018,724.8 L1034,727 L1034,740 L1001.6,740 Z" fill="#3aa37a"/>
<path d="M980,253 L1007,253 L1007,261 L993.5,264 L980,261 Z" fill="#3aa37a"/>
<g font-family="Liberation Sans" font-weight="bold" font-size="13" fill="#f4f4ee" text-anchor="middle">
  <text x="161" y="554">A1</text>
  <text x="309.5" y="747">A1</text>
  <text x="286.5" y="850">A1dir</text>
  <text x="676.2" y="764.5">A24</text>
  <text x="461.5" y="920">A24</text>
  <text x="908" y="486">A24</text>
  <text x="833.7" y="864.5">A25</text>
  <text x="1018" y="740">A25</text>
  <text x="18.5" y="335">A1</text>
</g>
<!-- labels -->
<defs>
  <g id="lblPink">
    <text x="195" y="347.8">Todi</text>
    <text x="356.6" y="373">Spoleto</text>
    <text x="186.7" y="508.7">Amelia</text>
    <text x="-2" y="522.5">efiascone</text>
    <text x="317.2" y="506">Terni</text>
    <text x="469.4" y="501.3">Leonessa</text>
    <text x="18.3" y="609.4">Viterbo</text>
    <text x="148.9" y="702">Civita Castellana</text>
    <text x="18.7" y="754.7">Vejano</text>
    <text x="66.3" y="843">Anguillara Sabazia</text>
    <text x="358.7" y="847">Palombara</text>
    <text x="375" y="869.3">Sabina</text>
    <text x="546.6" y="721">Fiamignano</text>
    <text x="544.7" y="838">Carsoli</text>
    <text x="714.6" y="887.4">Avezzano</text>
    <text x="544.7" y="962.4">Subiaco</text>
    <text x="25" y="393">Orvieto</text>
    <text x="916.8" y="787">Popoli Te</text>
  </g>
  <g id="lblPink2">
    <text x="433" y="620">Rieti</text>
    <text x="865" y="434.8">Teramo</text>
  </g>
  <g id="lblGreen">
    <text x="551.7" y="337">Norcia</text>
    <text x="644.4" y="457.5">Amatrice</text>
    <text x="823" y="537.6">Isola del Gran</text>
    <text x="825.6" y="559.6">Sasso d'Italia</text>
    <text x="962.5" y="311.6">Alba Adriatica</text>
  </g>
  <g id="lblBlue">
    <text x="1229" y="742">Lanciano</text>
    <text x="-2" y="942">Ladispoli</text>
    <text x="784" y="291.9">Ascoli Piceno</text>
  </g>
</defs>
<g font-family="Liberation Sans" font-size="16.6" stroke-linejoin="round">
  <use href="#lblPink" fill="none" stroke="#f0c4c2" stroke-width="3"/>
  <use href="#lblPink" fill="#8a4e55" stroke="#8a4e55" stroke-width="0.5"/>
  <g font-size="18">
    <use href="#lblPink2" fill="none" stroke="#f0c4c2" stroke-width="3"/>
    <use href="#lblPink2" fill="#7e3e46" stroke="#7e3e46" stroke-width="0.6"/>
  </g>
  <use href="#lblGreen" fill="none" stroke="#cfe6cb" stroke-width="3"/>
  <use href="#lblGreen" fill="#6b806b" stroke="#6b806b" stroke-width="0.5"/>
  <use href="#lblBlue" fill="none" stroke="#d0e0ea" stroke-width="3"/>
  <use href="#lblBlue" fill="#7a808a" stroke="#7a808a" stroke-width="0.5"/>
</g>
<text x="698" y="642.8" font-family="Liberation Sans" font-size="22.7" fill="#4a1416" stroke="#f0c4c4" stroke-width="3" paint-order="stroke">L'Aquila</text>
<text x="226" y="974" font-family="Liberation Sans" font-weight="bold" font-size="24" fill="#1a2030" stroke="#c8dce6" stroke-width="3" paint-order="stroke">Roma</text>
<text x="30" y="494" font-family="Liberation Sans" font-size="32.3" fill="#333" stroke="#fff" stroke-width="5" paint-order="stroke" stroke-linejoin="round">Cristina Gianni</text>
<text x="124" y="519.3" font-family="Liberation Sans" font-size="17" fill="#333" stroke="#fff" stroke-width="4" paint-order="stroke" stroke-linejoin="round">170</text>
<!-- markers -->
<g fill="#f0c64f" stroke="#111" stroke-width="2">
  <circle cx="337.3" cy="495.1" r="7.7"/>
  <circle cx="182.1" cy="549.2" r="7.7"/>
  <circle cx="738" cy="654.6" r="7.7"/>
  <circle cx="115.3" cy="789.2" r="7.7"/>
  <circle cx="268" cy="911.5" r="7.7"/>
  <circle cx="32.5" cy="937" r="7.7"/>
</g>
<circle cx="856" cy="542" r="7.7" fill="#5b8fd6" stroke="#111" stroke-width="2"/>
<rect x="193.5" y="930" width="18.5" height="18.5" fill="#e41a1c" stroke="#111" stroke-width="3"/>
</svg>

</div>
<!-- zoom buttons -->
<div class="abs" style="left:12px;top:265px;width:53px;height:53px;background:rgba(0,95,142,0.9)"></div>
<div class="abs" style="left:12px;top:322px;width:53px;height:53px;background:rgba(0,95,142,0.9)"></div>
<div class="abs" style="left:12px;top:379px;width:53px;height:53px;background:rgba(0,95,142,0.9)"></div>
<svg class="abs" style="left:12px;top:265px" width="53" height="167" viewBox="12 265 53 167">
  <path d="M38.5 273.6 V309 M20.9 291.3 H56.3" stroke="#fff" stroke-width="3.8"/>
  <path d="M20.9 348.3 H56.3" stroke="#fff" stroke-width="3.8"/>
  <g fill="#fff"><path d="M17.7,385 L31.5,385 L17.7,398.8 Z M59.3,385 L45.5,385 L59.3,398.8 Z M17.7,426 L31.5,426 L17.7,412.2 Z M59.3,426 L45.5,426 L59.3,412.2 Z"/></g>
  <path d="M22,389 L32.5,399.5 M55,389 L44.5,399.5 M22,422 L32.5,411.5 M55,422 L44.5,411.5" stroke="#fff" stroke-width="4.2"/>
</svg>
<!-- banner -->
<div class="abs" style="left:493px;top:265px;width:382px;height:53px;background:rgba(0,95,142,0.92)"></div>
<div class="t" style="left:507px;top:280.3px;color:#fff;font-weight:bold;font-size:24px">Seleziona i clienti da escludere</div>
<!-- gear -->
<div class="abs" style="left:1304px;top:265px;width:52px;height:53px;background:rgba(0,95,142,0.92)"></div>
<svg class="abs" style="left:1304px;top:265px" width="52" height="53" viewBox="0 0 52 53">
  <path d="M17.47,14.20 L16.89,8.23 A20.6,20.6 0 0 1 26.22,5.90 L28.52,11.45 A15.2,15.2 0 0 1 32.58,12.61 L37.47,9.13 A20.6,20.6 0 0 1 44.15,16.04 L40.49,20.81 A15.2,15.2 0 0 1 41.52,24.91 L46.98,27.40 A20.6,20.6 0 0 1 44.33,36.64 L38.38,35.86 A15.2,15.2 0 0 1 35.33,38.80 L35.91,44.77 A20.6,20.6 0 0 1 26.58,47.10 L24.28,41.55 A15.2,15.2 0 0 1 20.22,40.39 L15.33,43.87 A20.6,20.6 0 0 1 8.65,36.96 L12.31,32.19 A15.2,15.2 0 0 1 11.28,28.09 L5.82,25.60 A20.6,20.6 0 0 1 8.47,16.36 L14.42,17.14 A15.2,15.2 0 0 1 17.47,14.20 Z" fill="#fff"/>
  <circle cx="26.4" cy="26.5" r="5" fill="#136a96"/>
</svg>
<!-- OPZIONI panel -->
<div class="abs" style="left:996px;top:322px;width:360px;height:400px;background:#fff;border:3px solid #005f8e;border-top:none"></div>
<div class="abs" style="left:996px;top:322px;width:360px;height:56px;background:#005f8e"></div>
<div class="t" style="left:1014px;top:341.2px;color:#fff;font-weight:bold;font-size:19.5px">OPZIONI</div>
<svg class="abs" style="left:1316px;top:341px" width="22" height="22" viewBox="0 0 22 22"><path d="M2 2 L20 20 M20 2 L2 20" stroke="#fff" stroke-width="4"/></svg>
<div class="abs" style="left:1006px;top:392px;width:340px;height:40px;border:1px solid #c8c8c8;border-radius:5px;background:#fff"></div>
<div class="t" style="left:1013px;top:401.6px;color:#111;font-size:20px">Visualizza: Aree</div>
<svg class="abs" style="left:1325px;top:406px" width="16" height="12" viewBox="0 0 16 12"><path d="M2 3 L8 9 L14 3" fill="none" stroke="#111" stroke-width="2.2"/></svg>
<div class="abs" style="left:1006px;top:462px;width:340px;height:40px;border:1px solid #c8c8c8;border-radius:5px;background:#fff"></div>
<div class="t" style="left:1013px;top:471.7px;color:#111;font-size:20.8px">Clienti: Con competenze non p...</div>
<svg class="abs" style="left:1325px;top:476px" width="16" height="12" viewBox="0 0 16 12"><path d="M2 3 L8 9 L14 3" fill="none" stroke="#111" stroke-width="2.2"/></svg>
<!-- dropdown list -->
<div class="abs" style="left:966px;top:502px;width:380px;height:212px;background:#fff;border:1px solid #8a8a8a"></div>
<div class="abs" style="left:967px;top:678px;width:378px;height:35px;background:#1a66d4"></div>
<div class="t" style="left:973px;top:510.4px;color:#111;font-size:20.7px">Clienti: Nascondi</div>
<div class="t" style="left:973px;top:545.4px;color:#111;font-size:20.7px">Clienti: Mostra tutti</div>
<div class="t" style="left:973px;top:580.4px;color:#111;font-size:20.7px">Clienti: Inclusi</div>
<div class="t" style="left:973px;top:615.4px;color:#111;font-size:20.7px">Clienti: Inclusi e irraggiungibili</div>
<div class="t" style="left:973px;top:650.4px;color:#111;font-size:20.7px">Clienti: Esclusi</div>
<div class="t" style="left:973px;top:685.4px;color:#fff;font-size:20.7px">Clienti: Con competenze non possedute</div>
<svg class="abs" style="left:1163px;top:703px" width="16" height="22" viewBox="0 0 16 22"><path d="M1 1 L1 17 L5 13 L8 20 L11 19 L8 12 L13 12 Z" fill="#fff" stroke="#111" stroke-width="1.3"/></svg>
<!-- COMPETENZE panel -->
<div class="abs" style="left:981px;top:738px;width:375px;height:217px;background:#fff;border:3px solid #005f8e;border-top:none"></div>
<div class="abs" style="left:981px;top:738px;width:375px;height:56px;background:#005f8e"></div>
<div class="t" style="left:999px;top:757.9px;color:#fff;font-weight:bold;font-size:19px;letter-spacing:-0.4px">COMPETENZE NECESSARIE</div>
<svg class="abs" style="left:1316px;top:757px" width="22" height="22" viewBox="0 0 22 22"><path d="M2 2 L20 20 M20 2 L2 20" stroke="#fff" stroke-width="4"/></svg>
<div class="abs" style="left:984px;top:846px;width:369px;height:1px;background:#005f8e"></div>
<svg class="abs" style="left:985px;top:790px" width="60" height="160" viewBox="985 790 60 160">
  <rect x="992" y="798" width="32.5" height="32" fill="#fff" stroke="#000" stroke-width="1.8"/>
  <rect x="999" y="805" width="32.5" height="31.5" fill="#fff" stroke="#000" stroke-width="1.8"/>
  <rect x="1005" y="811" width="32.5" height="31.5" fill="#fff" stroke="#000" stroke-width="1.8"/>
  <rect x="992" y="851" width="45.5" height="45.5" fill="#f0c64f" stroke="#000" stroke-width="2"/>
  <rect x="992" y="903" width="45.5" height="45" fill="#5b8fd6" stroke="#000" stroke-width="2"/>
</svg>
<div class="t" style="left:1048px;top:809.5px;color:#111;font-size:21px">tutti</div>
<div class="t" style="left:1048px;top:852.5px;color:#111;font-size:20.8px">Apparecchiature industriali</div>
<div class="t" style="left:1048px;top:879.2px;color:#999;font-size:16.3px">Clienti: 34</div>
<div class="t" style="left:1048px;top:904.7px;color:#111;font-size:20.8px">Attrezzature professionali</div>
<div class="t" style="left:1048px;top:930.8px;color:#999;font-size:16.3px">Clienti: 4</div>
<svg class="abs" style="left:1300px;top:800px" width="56" height="150" viewBox="1300 800 56 150">
  <defs><g id="eye"><path d="M-19 0 Q0 -22 19 0 Q0 22 -19 0 Z" fill="#005f8e"/><circle r="7.9" fill="#fff"/><circle r="4" fill="#005f8e"/></g></defs>
  <use href="#eye" x="1327" y="820"/>
  <use href="#eye" x="1327" y="873"/>
  <use href="#eye" x="1327" y="925"/>
</svg>
<!-- scale bar -->
<svg class="abs" style="left:10px;top:920px" width="140" height="36" viewBox="10 920 140 36">
  <path d="M13.5 925 V952.5 H145.5 V925" fill="none" stroke="#1a6a96" stroke-width="3"/>
</svg>
<div class="t" style="left:50px;top:929px;color:#1a6a96;font-size:20px">20 km</div>



<!-- footer buttons -->
<div class="abs" style="left:12px;top:985px;width:147px;height:42px;border:1.3px solid #03628f;border-radius:6px"></div>
<div class="abs" style="left:183px;top:985px;width:137px;height:42px;border:1.3px solid #03628f;border-radius:6px"></div>
<svg class="abs" style="left:0;top:980px" width="330" height="50" viewBox="0 980 330 50">
  <path d="M25.9,1013.6 V997.4 Q25.9,995.4 27.9,995.4 H32 Q34,995.4 34,997.4 V999.8 H46 Q48,999.8 48,1001.8 V1013.6 Q48,1015.6 46,1015.6 H27.9 Q25.9,1015.6 25.9,1013.6 Z" fill="none" stroke="#03628f" stroke-width="2"/>
  <path d="M199.2,994.8 H214 L218.7,999.5 V1013.8 Q218.7,1015.8 216.7,1015.8 H199.2 Q197.2,1015.8 197.2,1013.8 V996.8 Q197.2,994.8 199.2,994.8 Z" fill="none" stroke="#03628f" stroke-width="2"/>
  <path d="M201.4,995 V1000.6 Q201.4,1001.6 202.4,1001.6 H210.9 Q211.9,1001.6 211.9,1000.6 V995" fill="none" stroke="#03628f" stroke-width="2"/>
  <circle cx="207.8" cy="1008.7" r="3.5" fill="#03628f"/>
</svg>
<div class="t" style="left:61px;top:995.6px;color:#03628f;font-weight:bold;font-size:19.2px">CARICA</div>
<div class="t" style="left:232px;top:995.6px;color:#03628f;font-weight:bold;font-size:19.2px">SALVA</div>
<div class="abs" style="left:532px;top:985px;width:147px;height:42px;background:#aaa;border-radius:6px"></div>
<div class="t" style="left:557px;top:995.8px;color:#fff;font-weight:bold;font-size:20px">INDIETRO</div>
<div class="abs" style="left:703px;top:985px;width:125px;height:42px;background:#03628f;border-radius:6px"></div>
<div class="t" style="left:727px;top:995.6px;color:#fff;font-weight:bold;font-size:20.5px">AVANTI</div>
</body></html>
